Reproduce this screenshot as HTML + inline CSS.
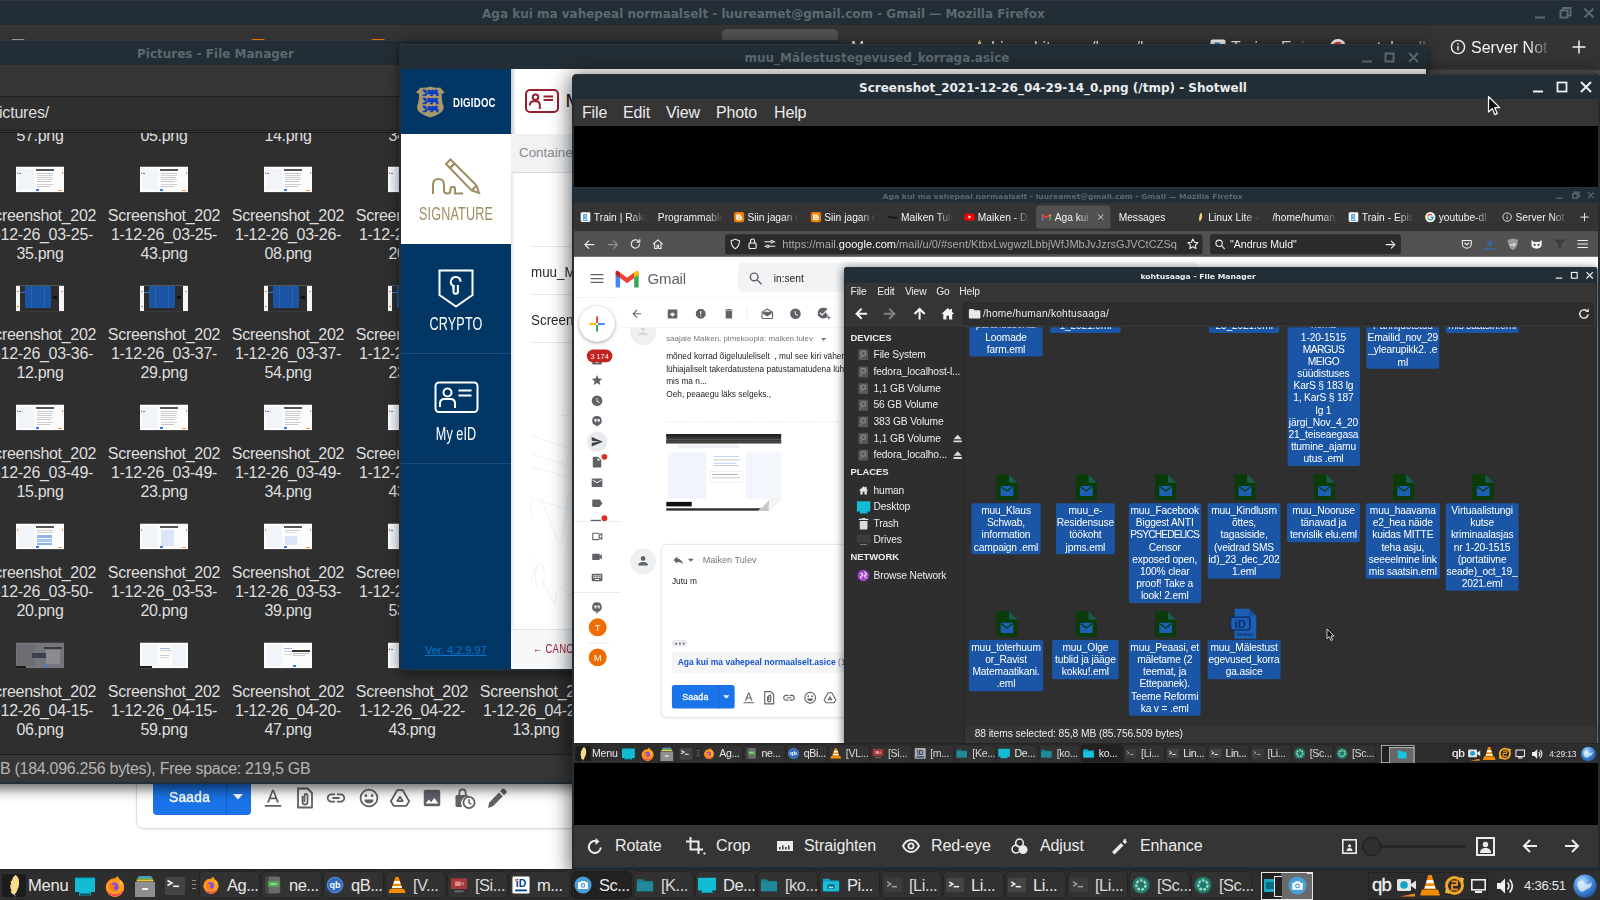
<!DOCTYPE html>
<html lang="et">
<head>
<meta charset="utf-8">
<title>Desktop</title>
<style>
*{box-sizing:border-box;margin:0;padding:0}
html,body{width:1600px;height:900px;overflow:hidden;background:#343434;font-family:"Liberation Sans",sans-serif;}
.abs{position:absolute}
.nw{white-space:nowrap}
.tb{position:absolute;background:#232d35;box-shadow:inset 0 1px 0 rgba(255,255,255,.05);height:25px;font-family:"DejaVu Sans",sans-serif;font-weight:bold;font-size:12px;color:#5b6971;line-height:25px;white-space:nowrap}
.tb.act{color:#e9ebec}
.tb span{position:absolute;top:1.500px}
svg{display:block;position:absolute;overflow:visible}
.desk{position:absolute;left:0;top:0;width:1600px;height:900px;overflow:hidden;background:#343434}
/* taskbar */
.task{position:absolute;left:0;top:869px;width:1600px;height:31px;background:#2e2e2e;border-top:1px solid #222;color:#e8e8e8;font-size:16.5px;white-space:nowrap}
.task .btn{position:absolute;top:1px;height:28px;width:61px;border:1px solid #232323;border-radius:5px;background:#323232}
.task .btn.on{background:#222;border-color:#1e1e1e}
.task .btn span{position:absolute;left:27px;top:0;line-height:26px;letter-spacing:-0.5px}
.task .btn.dim span{color:#d8d8d8}
.task .ic{position:absolute;left:2px;top:4px;width:18px;height:18px}
/* pictures file manager */
.lbl{position:absolute;width:124px;text-align:center;color:#dedede;font-size:16px;line-height:19px;letter-spacing:-0.3px;white-space:nowrap}
.th{position:absolute;width:48px;height:27px;background:#f3f5f8;overflow:hidden}
.th i{position:absolute;display:block}
.tl{position:absolute;background:#1a56a5;border-radius:3px;color:#fff;text-align:center;font-size:16px;line-height:19px;padding-top:2.500px;letter-spacing:-.27px;white-space:nowrap}
</style>
</head>
<body>
<div class="desk">

<!-- ===== main firefox window (background) ===== -->
<div class="abs ffw" style="left:0;top:0;width:1600px;height:869px;background:#fff;overflow:hidden">
<div class="tb" style="left:0;top:0;width:1600px"><span style="left:482px">Aga kui ma vahepeal normaalselt - luureamet@gmail.com - Gmail — Mozilla Firefox</span>
<svg style="left:1532px;top:0" width="70" height="25" viewBox="0 0 70 25" fill="none" stroke="#5b6971" stroke-width="2"><path d="M3 17.500h10"/><rect x="28.500" y="10.500" width="7" height="7"/><path d="M31 10.500v-2.500h7.500v7.500h-3"/><path d="M52.500 8.500l9 9M61.500 8.500l-9 9" stroke-width="1.800"/></svg></div>
<div class="abs" style="left:0;top:25px;width:1600px;height:44px;background:#343434;font-size:16px;color:#f4f4f4;white-space:nowrap">
<div class="abs" style="left:722px;top:4px;width:116px;height:36px;border-radius:5px;background:#515151"></div>
<svg style="left:10px;top:14px" width="16" height="16" viewBox="0 0 16 16"><rect x=".5" y=".5" width="15" height="15" rx="2" fill="#fff"/><path d="M4.500 12V3.500h3.500a2.600 2.600 0 0 1 .8 5.100L11 12H8.800L6.800 8.800H6.300V12zM6.300 5v2.300h1.600a1.150 1.150 0 0 0 0-2.300z" fill="#1a8fe0"/><rect x="3.500" y="13" width="9" height="1.200" fill="#1a8fe0"/></svg>
<div class="abs" style="left:31px;top:13px;width:83px;height:20px;line-height:19px;overflow:hidden;-webkit-mask-image:linear-gradient(90deg,#000 57px,transparent 81px);mask-image:linear-gradient(90deg,#000 57px,transparent 81px)">Train | Rakuten</div>
<div class="abs" style="left:131px;top:13px;width:103px;height:20px;line-height:19px;overflow:hidden;-webkit-mask-image:linear-gradient(90deg,#000 77px,transparent 101px);mask-image:linear-gradient(90deg,#000 77px,transparent 101px)">Programmable</div>
<svg style="left:250px;top:14px" width="16" height="16" viewBox="0 0 16 16"><rect width="16" height="16" rx="3.500" fill="#f57c00"/><path d="M5.800 3.500h3a2.200 2.200 0 0 1 2.200 2.200v.6c0 .4.300.7.700.7.400 0 .800.300.800.800v2.500A2.700 2.700 0 0 1 9.800 13h-4A2.700 2.700 0 0 1 3.500 10.300V5.800A2.300 2.300 0 0 1 5.800 3.500z" fill="#fff"/><rect x="5.500" y="5.600" width="3.500" height="1.300" rx=".6" fill="#f57c00"/><rect x="5.500" y="9.300" width="5" height="1.300" rx=".6" fill="#f57c00"/></svg>
<div class="abs" style="left:271px;top:13px;width:83px;height:20px;line-height:19px;overflow:hidden;-webkit-mask-image:linear-gradient(90deg,#000 57px,transparent 81px);mask-image:linear-gradient(90deg,#000 57px,transparent 81px)">Siin jagan oma</div>
<svg style="left:370px;top:14px" width="16" height="16" viewBox="0 0 16 16"><rect width="16" height="16" rx="3.500" fill="#f57c00"/><path d="M5.800 3.500h3a2.200 2.200 0 0 1 2.200 2.200v.6c0 .4.300.7.700.7.400 0 .800.300.800.800v2.500A2.700 2.700 0 0 1 9.800 13h-4A2.700 2.700 0 0 1 3.500 10.300V5.800A2.300 2.300 0 0 1 5.800 3.500z" fill="#fff"/><rect x="5.500" y="5.600" width="3.500" height="1.300" rx=".6" fill="#f57c00"/><rect x="5.500" y="9.300" width="5" height="1.300" rx=".6" fill="#f57c00"/></svg>
<div class="abs" style="left:391px;top:13px;width:83px;height:20px;line-height:19px;overflow:hidden;-webkit-mask-image:linear-gradient(90deg,#000 57px,transparent 81px);mask-image:linear-gradient(90deg,#000 57px,transparent 81px)">Siin jagan oma</div>
<svg style="left:490px;top:14px" width="16" height="16" viewBox="0 0 16 16"><path d="M1 8.500c2-2 4-1 6 0s4 1.500 8-.5" stroke="#111" stroke-width="2.200" fill="none"/></svg>
<div class="abs" style="left:511px;top:13px;width:83px;height:20px;line-height:19px;overflow:hidden;-webkit-mask-image:linear-gradient(90deg,#000 57px,transparent 81px);mask-image:linear-gradient(90deg,#000 57px,transparent 81px)">Maiken Tulev</div>
<svg style="left:610px;top:14px" width="16" height="16" viewBox="0 0 16 16"><rect x="0" y="2.500" width="16" height="11" rx="3" fill="#f00"/><path d="M6.300 5.300v5.400L11 8z" fill="#fff"/></svg>
<div class="abs" style="left:631px;top:13px;width:83px;height:20px;line-height:19px;overflow:hidden;-webkit-mask-image:linear-gradient(90deg,#000 57px,transparent 81px);mask-image:linear-gradient(90deg,#000 57px,transparent 81px)">Maiken - DJ</div>
<svg style="left:730px;top:14px" width="16" height="16" viewBox="0 0 16 16"><path d="M1 3.500h2.200L8 7.200l4.800-3.700H15v9.500h-2.400V6.800L8 10.300 3.400 6.800V13H1z" fill="#ea4335"/><path d="M1 3.500h1.200V13H1z" fill="#4285f4"/><path d="M1 11h2.400v2H1z" fill="#4285f4"/><path d="M12.600 6.800L15 4.500V13h-2.400z" fill="#34a853"/><path d="M12.600 4.200L15 3.500v2l-2.400 1.800z" fill="#fbbc04"/></svg>
<div class="abs" style="left:751px;top:13px;width:62px;height:20px;line-height:19px;overflow:hidden;-webkit-mask-image:linear-gradient(90deg,#000 36px,transparent 60px);mask-image:linear-gradient(90deg,#000 36px,transparent 60px)">Aga kui ma</div>
<div class="abs" style="left:851px;top:13px;width:103px;height:20px;line-height:19px;overflow:hidden;-webkit-mask-image:linear-gradient(90deg,#000 77px,transparent 101px);mask-image:linear-gradient(90deg,#000 77px,transparent 101px)">Messages</div>
<svg style="left:970px;top:14px" width="16" height="16" viewBox="0 0 16 16"><path d="M9.500 1c2 2 2.500 5 1.500 8.500-.6 2-1.500 4-3.500 5.500-.5-1-.8-2-.8-3.500C6.700 8 7.500 4 9.500 1z" fill="#f3d36a"/></svg>
<div class="abs" style="left:991px;top:13px;width:83px;height:20px;line-height:19px;overflow:hidden;-webkit-mask-image:linear-gradient(90deg,#000 57px,transparent 81px);mask-image:linear-gradient(90deg,#000 57px,transparent 81px)">Linux Lite - </div>
<div class="abs" style="left:1091px;top:13px;width:103px;height:20px;line-height:19px;overflow:hidden;-webkit-mask-image:linear-gradient(90deg,#000 77px,transparent 101px);mask-image:linear-gradient(90deg,#000 77px,transparent 101px)">/home/human/</div>
<svg style="left:1210px;top:14px" width="16" height="16" viewBox="0 0 16 16"><rect x=".5" y=".5" width="15" height="15" rx="2" fill="#fff"/><path d="M4.500 12V3.500h3.500a2.600 2.600 0 0 1 .8 5.100L11 12H8.800L6.800 8.800H6.300V12zM6.300 5v2.300h1.600a1.150 1.150 0 0 0 0-2.300z" fill="#1a8fe0"/><rect x="3.500" y="13" width="9" height="1.200" fill="#1a8fe0"/></svg>
<div class="abs" style="left:1231px;top:13px;width:83px;height:20px;line-height:19px;overflow:hidden;-webkit-mask-image:linear-gradient(90deg,#000 57px,transparent 81px);mask-image:linear-gradient(90deg,#000 57px,transparent 81px)">Train - Episode</div>
<svg style="left:1330px;top:14px" width="16" height="16" viewBox="0 0 16 16"><circle cx="8" cy="8" r="8" fill="#fff"/><path d="M13.300 8.100c0-.4 0-.7-.1-1.100H8v2.100h3c-.15.700-.5 1.300-1.100 1.700v1.400h1.800c1-1 1.600-2.400 1.600-4.100z" fill="#4285f4"/><path d="M8 13.500c1.500 0 2.700-.5 3.600-1.300L9.900 10.800c-.5.300-1.100.5-1.900.5-1.400 0-2.600-1-3.100-2.300H3.100v1.400A5.500 5.500 0 0 0 8 13.500z" fill="#34a853"/><path d="M4.900 9c-.2-.7-.2-1.400 0-2V5.600H3.100a5.500 5.500 0 0 0 0 4.800z" fill="#fbbc04"/><path d="M8 4.700c.8 0 1.500.3 2.100.8l1.500-1.500A5.500 5.500 0 0 0 3.100 5.600L4.900 7C5.400 5.700 6.600 4.700 8 4.700z" fill="#ea4335"/></svg>
<div class="abs" style="left:1351px;top:13px;width:83px;height:20px;line-height:19px;overflow:hidden;-webkit-mask-image:linear-gradient(90deg,#000 57px,transparent 81px);mask-image:linear-gradient(90deg,#000 57px,transparent 81px)">youtube-dl</div>
<svg style="left:1450px;top:14px" width="16" height="16" viewBox="0 0 16 16" fill="none" stroke="#f2f2f2" stroke-width="1.400"><circle cx="8" cy="8" r="6.600"/><path d="M8 7v4.500M8 4.300v1.400"/></svg>
<div class="abs" style="left:1471px;top:13px;width:83px;height:20px;line-height:19px;overflow:hidden;-webkit-mask-image:linear-gradient(90deg,#000 57px,transparent 81px);mask-image:linear-gradient(90deg,#000 57px,transparent 81px)">Server Not F</div>
<svg style="left:818px;top:17px" width="10" height="10" viewBox="0 0 10 10" stroke="#f2f2f2" stroke-width="1.300"><path d="M1 1l8 8M9 1l-8 8"/></svg>
<svg style="left:1572px;top:15px" width="14" height="14" viewBox="0 0 14 14" fill="none" stroke="#f2f2f2" stroke-width="1.500"><path d="M7 .5v13M.5 7h13"/></svg>
</div>
<div class="abs" style="left:0;top:69px;width:1600px;height:40px;background:#515151;border-top:1px solid #3e3e3e;border-bottom:1px solid #2f2f2f">
<svg style="left:15px;top:11px" width="18" height="18" viewBox="0 0 18 18" fill="none" stroke="#f0f0f0" stroke-width="1.700" stroke-linecap="round" stroke-linejoin="round"><path d="M16 9H2.500M8 3L2 9l6 6"/></svg>
<svg style="left:52px;top:11px" width="18" height="18" viewBox="0 0 18 18" fill="none" stroke="#f0f0f0" stroke-width="1.700" stroke-linecap="round" stroke-linejoin="round" opacity=".42"><path d="M2 9h13.500M10 3l6 6-6 6"/></svg>
<svg style="left:87px;top:10px" width="18" height="18" viewBox="0 0 18 18" fill="none" stroke="#f0f0f0" stroke-width="1.700" stroke-linecap="round" stroke-linejoin="round"><path d="M15.500 9.500a6.500 6.500 0 1 1-2-5.200"/><path d="M15.800 2v4.200h-4.200"/></svg>
<svg style="left:122px;top:10px" width="18" height="18" viewBox="0 0 18 18" fill="none" stroke="#f0f0f0" stroke-width="1.700" stroke-linecap="round" stroke-linejoin="round"><path d="M2 9l7-6.500L16 9M4 8v8h3.800v-5h2.400v5H14V8"/></svg>
<div class="abs" style="left:236px;top:4px;width:746px;height:31px;border-radius:4px;background:#2b2b2b"></div>
<svg style="left:243px;top:10px" width="18" height="18" viewBox="0 0 18 18" fill="none" stroke="#f0f0f0" stroke-width="1.700" stroke-linecap="round" stroke-linejoin="round" stroke-width="1.500"><path d="M9 1.500c2 1.300 4 1.800 6.500 2 0 6-2 10.500-6.500 13C4.500 14 2.500 9.500 2.500 3.500 5 3.300 7 2.800 9 1.500z"/></svg>
<svg style="left:271px;top:9px" width="16" height="19" viewBox="0 0 16 19" fill="none" stroke="#f0f0f0" stroke-width="1.700" stroke-linecap="round" stroke-linejoin="round" stroke-width="1.600"><rect x="2.500" y="8.500" width="11" height="8.500" rx="1.500"/><path d="M4.800 8.500V5.500a3.200 3.200 0 0 1 6.400 0v3"/></svg>
<svg style="left:296px;top:11px" width="20" height="16" viewBox="0 0 20 16" fill="none" stroke="#f0f0f0" stroke-width="1.700" stroke-linecap="round" stroke-linejoin="round" stroke-width="1.500"><path d="M2 4.500h9M15.500 4.500H18M2 11.500h2.500M9 11.500h9"/><circle cx="13.200" cy="4.500" r="2"/><circle cx="6.800" cy="11.500" r="2"/></svg>
<div class="abs nw" style="left:325.500px;top:8px;font-size:17.300px;line-height:22px;color:#a9a9a9">https://mail.<span style="color:#fbfbfb">google.com</span>/mail/u/0/#sent/KtbxLwgwzlLbbjWfJMbJvJzrsGJVCtCZSq</div>
<svg style="left:957px;top:9px" width="20" height="20" viewBox="0 0 20 20" fill="none" stroke="#f0f0f0" stroke-width="1.700" stroke-linecap="round" stroke-linejoin="round" stroke-width="1.500"><path d="M10 2.200l2.400 5 5.400.7-4 3.800 1 5.500-4.800-2.700-4.800 2.700 1-5.500-4-3.800 5.400-.7z"/></svg>
<div class="abs" style="left:994px;top:4px;width:298px;height:31px;border-radius:4px;background:#2b2b2b"></div>
<svg style="left:1001px;top:11px" width="17" height="17" viewBox="0 0 17 17" fill="none" stroke="#f0f0f0" stroke-width="1.700" stroke-linecap="round" stroke-linejoin="round" stroke-width="1.700"><circle cx="7" cy="7" r="5"/><path d="M11 11l4.500 4.500"/></svg>
<div class="abs nw" style="left:1025px;top:8px;font-size:16.500px;line-height:22px;color:#f4f4f4">"Andrus Muld"</div>
<svg style="left:1267px;top:11px" width="18" height="18" viewBox="0 0 18 18" fill="none" stroke="#f0f0f0" stroke-width="1.700" stroke-linecap="round" stroke-linejoin="round" stroke-width="1.500"><path d="M2 9h13.500M10 3.500L15.500 9 10 14.500"/></svg>
<svg style="left:1386px;top:10px" width="18" height="18" viewBox="0 0 18 18" fill="none" stroke="#f0f0f0" stroke-width="1.700" stroke-linecap="round" stroke-linejoin="round" stroke-width="1.500"><path d="M2 3.500h14v5a7 7 0 0 1-14 0z"/><path d="M5.800 7.500L9 10.500l3.200-3"/></svg>
<svg style="left:1422px;top:9px" width="18" height="20" viewBox="0 0 18 20" fill="none" stroke="#2f6fd0" stroke-width="1.700" stroke-linecap="round"><path d="M9 2v10M4.500 8L9 12.500 13.500 8M2 17.500h14"/></svg>
<svg style="left:1457px;top:9px" width="20" height="21" viewBox="0 0 20 21"><path d="M10 1c2.500 1.500 5 2 8 2.200 0 8-2.500 13.500-8 16.800C4.500 16.700 2 11.200 2 3.200 5 3 7.500 2.500 10 1z" fill="#9a9a9a"/><text x="10" y="12.500" font-size="6.500" font-weight="bold" text-anchor="middle" fill="#fff" font-family="Liberation Sans,sans-serif">uD</text></svg>
<svg style="left:1494px;top:11px" width="20" height="16" viewBox="0 0 20 16"><path d="M2 2l4 3h8l4-3v7c0 4-3.500 6.500-8 6.500S2 13 2 9z" fill="#f4f4f4"/><circle cx="7" cy="9.500" r="1.700" fill="#515151"/><circle cx="13" cy="9.500" r="1.700" fill="#515151"/></svg>
<svg style="left:1530px;top:11px" width="20" height="18" viewBox="0 0 20 18"><path d="M1 1h18l-7 8v7l-4-2.500V9z" fill="#3c3c3c"/></svg>
<svg style="left:1567px;top:11px" width="18" height="16" viewBox="0 0 18 16" fill="none" stroke="#f0f0f0" stroke-width="1.700" stroke-linecap="round" stroke-linejoin="round" stroke-width="1.700"><path d="M1.500 2.500h15M1.500 8h15M1.500 13.500h15"/></svg>
</div>
<div class="abs gm" style="left:0;top:109px;width:1600px;height:759px;background:#fff;color:#222">
 <!-- header -->
 <svg style="left:26px;top:26px" width="20" height="16" viewBox="0 0 20 16" stroke="#5f6368" stroke-width="2"><path d="M0 2h20M0 8h20M0 14h20"/></svg>
 <svg style="left:64px;top:20.500px" width="38" height="28" viewBox="0 0 38 28"><path d="M1 4.500v21a1.500 1.500 0 0 0 1.500 1.500H8V11z" fill="#4285f4"/><path d="M37 4.500v21a1.500 1.500 0 0 1-1.500 1.500H30V11z" fill="#34a853"/><path d="M30 3.500l3-2.300a2.500 2.500 0 0 1 4 2V7L30 12z" fill="#fbbc04"/><path d="M8 3.500L5 1.200a2.500 2.500 0 0 0-4 2V7l7 5z" fill="#c5221f"/><path d="M8 3.500V12l11 8.200L30 12V3.500L19 11.700z" fill="#ea4335"/></svg>
 <div class="abs nw" style="left:115px;top:19.500px;font-size:23.500px;line-height:30px;color:#5f6368;letter-spacing:-.3px">Gmail</div>
 <div class="abs" style="left:256px;top:9px;width:720px;height:46px;border-radius:8px;background:#f1f3f4"></div>
 <svg style="left:273px;top:22.500px" width="22" height="22" viewBox="0 0 22 22" fill="none" stroke="#5f6368" stroke-width="2.200"><circle cx="8.500" cy="8.500" r="6"/><path d="M13 13l7 7"/></svg>
 <div class="abs nw" style="left:312px;top:23.500px;font-size:16px;line-height:22px;color:#202124">in:sent</div>
 <div class="abs" style="left:0;top:63px;width:1600px;height:1px;background:#eceff1"></div>
 <!-- left rail -->
 <div class="abs" style="left:8px;top:77px;width:56px;height:56px;border-radius:50%;background:#fff;box-shadow:0 1px 3px rgba(60,64,67,.4),0 2px 7px 1px rgba(60,64,67,.18)"></div>
 <svg style="left:22px;top:91px" width="28" height="28" viewBox="0 0 28 28"><path d="M12.500 2h3v10.500h-3z" fill="#ea4335"/><path d="M12.500 15.500h3V26h-3z" fill="#34a853"/><path d="M2 12.500h10.500v3H2z" fill="#fbbc04"/><path d="M15.500 12.500H26v3H15.500z" fill="#4285f4"/></svg>

 <svg style="left:26px;top:151px" width="20" height="20" viewBox="0 0 24 24"><path d="M19 3H5c-1.100 0-2 .9-2 2v14c0 1.100.9 2 2 2h14c1.100 0 2-.9 2-2V5c0-1.100-.9-2-2-2zm0 12h-4c0 1.660-1.350 3-3 3s-3-1.340-3-3H5V5h14v10z" fill="#5f6368"/></svg>
 <div class="abs nw" style="left:20px;top:145px;width:40px;height:20px;border-radius:10px;background:#c5221f;color:#fff;font-size:11.500px;line-height:20px;text-align:center">3 174</div>
 <svg style="left:26px;top:183px" width="20" height="20" viewBox="0 0 24 24"><path d="M12 17.270L18.180 21l-1.640-7.030L22 9.240l-7.190-.61L12 2 9.190 8.630 2 9.240l5.460 4.730L5.820 21z" fill="#5f6368"/></svg>
 <svg style="left:26px;top:215px" width="20" height="20" viewBox="0 0 24 24"><path d="M12 2a10 10 0 1 0 0 20 10 10 0 0 0 0-20zm4.200 14.200L11 13V7h1.500v5.200l4.500 2.700z" fill="#5f6368"/></svg>
 <svg style="left:26px;top:247px" width="20" height="20" viewBox="0 0 24 24"><path d="M12 2a9 9 0 0 0-1.500 17.900V23l4-3.400A9 9 0 0 0 12 2zM11 12l-1 2H8.500l1-2H7V8h4zm6 0l-1 2h-1.500l1-2H13V8h4z" fill="#5f6368"/></svg>
 <div class="abs" style="left:20px;top:273px;width:32px;height:32px;border-radius:50%;background:#e8eaed"></div>
 <svg style="left:26px;top:279px" width="20" height="20" viewBox="0 0 24 24"><path d="M2.010 21L23 12 2.010 3 2 10l15 2-15 2z" fill="#3c4043"/></svg>
 <svg style="left:26px;top:311px" width="20" height="20" viewBox="0 0 24 24"><path d="M14 2H6c-1.100 0-2 .9-2 2v16c0 1.100.9 2 2 2h12c1.100 0 2-.9 2-2V8l-6-6zm-1 7V3.500L18.500 9H13z" fill="#5f6368"/></svg>
 <div class="abs" style="left:43px;top:308px;width:9px;height:9px;border-radius:50%;background:#d93025"></div>
 <svg style="left:26px;top:343px" width="20" height="20" viewBox="0 0 24 24"><path d="M20 4H4c-1.100 0-2 .9-2 2v12c0 1.100.9 2 2 2h16c1.100 0 2-.9 2-2V6c0-1.100-.9-2-2-2zm0 4l-8 5-8-5V6l8 5 8-5v2z" fill="#5f6368"/></svg>
 <svg style="left:26px;top:375px" width="20" height="20" viewBox="0 0 24 24"><path d="M17.630 5.840C17.270 5.330 16.670 5 16 5L5 5.010C3.900 5.010 3 5.900 3 7v10c0 1.100.9 1.990 2 1.990L16 19c.67 0 1.270-.33 1.630-.84L22 12l-4.370-6.160z" fill="#5f6368"/></svg>
 <div class="abs" style="left:26px;top:411px;width:16px;height:2px;background:#5f6368"></div>
 <div class="abs" style="left:43px;top:404px;width:9px;height:9px;border-radius:50%;background:#d93025"></div>
 <div class="abs" style="left:0;top:413px;width:72px;height:1px;background:#e0e0e0"></div>
 <svg style="left:26px;top:427px" width="20" height="20" viewBox="0 0 24 24" fill="none" stroke="#5f6368" stroke-width="2" stroke-linejoin="round"><path d="M4 6h9.500c1.400 0 2.500 1.100 2.500 2.500v7c0 1.400-1.100 2.500-2.500 2.500H4z" /><path d="M16 10.500l5-4v11l-5-4"/></svg>
 <svg style="left:26px;top:459px" width="20" height="20" viewBox="0 0 24 24"><path d="M17 10.500V7c0-.55-.45-1-1-1H4c-.55 0-1 .45-1 1v10c0 .55.450 1 1 1h12c.55 0 1-.45 1-1v-3.500l4 4v-11l-4 4z" fill="#5f6368"/></svg>
 <svg style="left:26px;top:491px" width="20" height="20" viewBox="0 0 24 24"><path d="M20 5H4c-1.100 0-1.990.9-1.990 2L2 17c0 1.100.9 2 2 2h16c1.100 0 2-.9 2-2V7c0-1.100-.9-2-2-2zm-9 3h2v2h-2V8zm0 3h2v2h-2v-2zM8 8h2v2H8V8zm0 3h2v2H8v-2zm-1 2H5v-2h2v2zm0-3H5V8h2v2zm9 7H8v-2h8v2zm0-4h-2v-2h2v2zm0-3h-2V8h2v2zm3 3h-2v-2h2v2zm0-3h-2V8h2v2z" fill="#5f6368"/></svg>
 <div class="abs" style="left:0;top:524px;width:72px;height:1px;background:#e0e0e0"></div>
 <svg style="left:26px;top:538px" width="20" height="22" viewBox="0 0 24 26"><path d="M12 2a9 9 0 0 0-1.500 17.900V24l4-4.400A9 9 0 0 0 12 2zM11 12l-1 2H8.500l1-2H7V8h4zm6 0l-1 2h-1.500l1-2H13V8h4z" fill="#5f6368"/></svg>
 <div class="abs" style="left:23px;top:565px;width:28px;height:28px;border-radius:50%;background:#ef6c00;color:#fff;font-size:15px;line-height:28px;text-align:center">T</div>
 <div class="abs" style="left:23px;top:603px;width:33px;height:1px;background:#e0e0e0"></div>
 <div class="abs" style="left:23px;top:612px;width:28px;height:28px;border-radius:50%;background:#ef6c00;color:#fff;font-size:15px;line-height:28px;text-align:center">M</div>
 <!-- message: avatar + text (toolbar overlays top) -->
 <div class="abs" style="left:88px;top:98px;width:40px;height:40px;border-radius:50%;background:#eff0f1;border:1px solid #e6e7e8"></div>
 <svg style="left:98px;top:106px" width="20" height="20" viewBox="0 0 24 24"><path d="M12 12c2.210 0 4-1.790 4-4s-1.790-4-4-4-4 1.790-4 4 1.790 4 4 4zm0 2c-2.670 0-8 1.340-8 4v2h16v-2c0-2.660-5.330-4-8-4z" fill="#d5d7da"/></svg>
 <div class="abs nw" style="left:144px;top:119px;font-size:12.400px;line-height:18px;color:#777">saajale Maiken, pimekoopia: maiken.tulev</div>
 <svg style="left:386px;top:127px" width="8" height="5" viewBox="0 0 8 5"><path d="M0 0h8L4 4.500z" fill="#777"/></svg>
 <div class="abs nw" style="left:144px;top:145.800px;font-size:13px;line-height:19.750px;color:#222">mõned korrad õigeluuleliselt &nbsp;, mul see kiri vähem oluline kui teised<br>lühiajaliselt takerdatustena patustamatudena lühidalt öeldes see<br>mis ma n...<br>Oeh, peaaegu läks selgeks.,</div>
 <div class="abs" style="left:144px;top:258px;width:900px;height:0;border-top:1px dotted #d8d8d8"></div>
 <!-- toolbar -->
 <div class="abs" style="left:72px;top:64px;width:1528px;height:47px;background:#fff;border-bottom:1px solid #eceff1"></div>
 <svg style="left:88px;top:79px" width="20" height="20" viewBox="0 0 24 24"><path d="M20 11H7.830l5.590-5.590L12 4l-8 8 8 8 1.410-1.410L7.830 13H20v-2z" fill="#5f6368"/></svg>
 <svg style="left:144px;top:79px" width="20" height="20" viewBox="0 0 24 24"><path d="M20.540 5.230l-1.390-1.680C18.880 3.210 18.470 3 18 3H6c-.47 0-.88.210-1.160.55L3.460 5.230C3.170 5.570 3 6.020 3 6.500V19c0 1.100.9 2 2 2h14c1.100 0 2-.9 2-2V6.500c0-.48-.17-.93-.46-1.270zM12 17.500L6.500 12H10v-2h4v2h3.500L12 17.500zM5.120 5l.81-1h12l.94 1H5.120z" fill="#5f6368"/></svg>
 <svg style="left:188px;top:79px" width="20" height="20" viewBox="0 0 24 24"><path d="M15.730 3H8.270L3 8.270v7.460L8.270 21h7.460L21 15.730V8.270L15.730 3zM12 17.300c-.72 0-1.300-.58-1.300-1.300s.58-1.300 1.300-1.300 1.300.58 1.300 1.300-.58 1.300-1.300 1.300zm1-4.300h-2V7h2v6z" fill="#5f6368"/></svg>
 <svg style="left:232px;top:79px" width="20" height="20" viewBox="0 0 24 24"><path d="M6 19c0 1.100.9 2 2 2h8c1.100 0 2-.9 2-2V7H6v12zM19 4h-3.500l-1-1h-5l-1 1H5v2h14V4z" fill="#5f6368"/></svg>
 <div class="abs" style="left:270px;top:78px;width:1px;height:20px;background:#e3e5e8"></div>
 <svg style="left:291px;top:78px" width="22" height="22" viewBox="0 0 24 24" fill="none" stroke="#5f6368" stroke-width="1.800" stroke-linejoin="round"><path d="M3 9.500L12 4l9 5.500V19a1 1 0 0 1-1 1H4a1 1 0 0 1-1-1z"/><path d="M5.500 11.500v-2h13v2L12 15.500z" fill="#5f6368"/></svg>
 <svg style="left:336px;top:79px" width="20" height="20" viewBox="0 0 24 24"><path d="M12 2a10 10 0 1 0 0 20 10 10 0 0 0 0-20zm4.200 14.200L11 13V7h1.500v5.200l4.500 2.700z" fill="#5f6368"/></svg>
 <svg style="left:379px;top:78px" width="22" height="22" viewBox="0 0 24 24"><path d="M11 2a9 9 0 1 0 8.500 12h-.1a6 6 0 0 1-.9-10.400A9 9 0 0 0 11 2zm-1.500 13.500L5 11l1.400-1.400 3.100 3.100 6.600-6.600L17.500 7.500z" fill="#5f6368"/><path d="M20 15.500h1.600v2.400H24v1.600h-2.400V22H20v-2.500h-2.400v-1.600H20z" fill="#5f6368"/></svg>
 <!-- inline image -->
 <div class="abs" style="left:144px;top:277px;width:180px;height:120px;background:#fff;overflow:hidden">
  <div class="abs" style="left:0;top:0;width:180px;height:15px;background:#333"></div><div class="abs" style="left:0;top:0;width:180px;height:4px;background:#222"></div><div class="abs" style="left:0;top:10px;width:180px;height:5px;background:#444"></div>
  <div class="abs" style="left:0;top:8px;width:180px;height:1px;background:#6a6a6a"></div>
  <div class="abs" style="left:0;top:15px;width:180px;height:14px;background:#fff"></div>
  <div class="abs" style="left:18px;top:17px;width:96px;height:5px;background:#eef1f5"></div>
  <div class="abs" style="left:3px;top:29px;width:60px;height:72px;background:#f0f5fc"></div>
  <div class="abs" style="left:124px;top:29px;width:56px;height:72px;background:#f3f7fd"></div>
  <div class="abs" style="left:68px;top:58px;width:52px;height:18px;border:1px solid #e4e6ea"></div>
  <div class="abs" style="left:74px;top:35px;width:40px;height:1px;background:#9db7e8"></div>
  <div class="abs" style="left:74px;top:40px;width:42px;height:1px;background:#aaa"></div>
  <div class="abs" style="left:74px;top:45px;width:36px;height:1px;background:#9db7e8"></div>
  <div class="abs" style="left:74px;top:49px;width:40px;height:1px;background:#aaa"></div>
  <div class="abs" style="left:72px;top:63px;width:40px;height:1px;background:#888"></div>
  <div class="abs" style="left:72px;top:68px;width:44px;height:1px;background:#aaa"></div>
  <div class="abs" style="left:0;top:106px;width:40px;height:7px;background:#111"></div>
  <div class="abs" style="left:0;top:116px;width:162px;height:4px;background:#2a2a2a"></div>
  <svg style="left:144px;top:100px" width="36" height="20" viewBox="0 0 36 20"><path d="M0 20h18L36 2V0H20z" fill="#fff"/><path d="M0 20L17 3l-1 17z" fill="#c8c8c8"/><path d="M16 20h2L36 2V0H20l-3 3z" fill="#f4f4f4"/></svg>
 </div>
 <!-- reply / compose -->
 <div class="abs" style="left:88px;top:456px;width:40px;height:40px;border-radius:50%;background:#eff0f1;border:1px solid #e8e9ea"></div>
 <svg style="left:97px;top:464px" width="22" height="22" viewBox="0 0 24 24"><path d="M12 12c2.210 0 4-1.790 4-4s-1.790-4-4-4-4 1.790-4 4 1.790 4 4 4zm0 2c-2.670 0-8 1.340-8 4v2h16v-2c0-2.660-5.330-4-8-4z" fill="#5f6368"/></svg>
 <div class="abs" style="left:136px;top:449px;width:1450px;height:271px;border:1px solid #dadce0;border-radius:8px;box-shadow:0 1px 2px rgba(0,0,0,.08)"></div>
 <svg style="left:153px;top:464px" width="20" height="20" viewBox="0 0 24 24"><path d="M10 9V5l-7 7 7 7v-4.100c5 0 8.500 1.600 11 5.100-1-5-4-10-11-11z" fill="#5f6368"/></svg>
 <svg style="left:178px;top:472px" width="9" height="5" viewBox="0 0 9 5"><path d="M0 0h9L4.500 4.500z" fill="#5f6368"/></svg>
 <div class="abs nw" style="left:201px;top:463px;font-size:14.300px;line-height:20px;color:#777">Maiken Tulev</div>
 <div class="abs nw" style="left:153px;top:498px;font-size:13px;line-height:18px;color:#222">Jutu m</div>
 <div class="abs" style="left:153px;top:599px;width:24px;height:10px;border-radius:5px;background:#e8eaed"></div>
 <div class="abs" style="left:157.500px;top:602.500px;width:3px;height:3px;border-radius:50%;background:#5f6368;box-shadow:6px 0 0 #5f6368,12px 0 0 #5f6368"></div>
 <div class="abs" style="left:153px;top:618px;width:1400px;height:32px;background:#f5f5f5"></div>
 <div class="abs nw" style="left:162px;top:624px;font-size:13.300px;line-height:20px;color:#15c;font-weight:bold">Aga kui ma vahepeal normaalselt.asice <span style="color:#777;font-weight:normal">(196 kB)</span></div>
 <div class="abs" style="left:153px;top:669px;width:98px;height:37px;border-radius:4px;background:#1a73e8"></div>
 <div class="abs" style="left:226px;top:669px;width:1px;height:37px;background:#1660c6"></div>
 <div class="abs nw" style="left:168.500px;top:677.500px;font-size:15px;line-height:20px;color:#fff;letter-spacing:.25px;-webkit-text-stroke:.45px #fff;transform:scaleX(.92);transform-origin:0 0">Saada</div>
 <svg style="left:233px;top:685px" width="10" height="6" viewBox="0 0 10 6"><path d="M0 0h10L5 5.500z" fill="#fff"/></svg>
 <!-- A format -->
 <svg style="left:262px;top:678px" width="22" height="22" viewBox="0 0 24 24"><path d="M3 21.500h18v-1.800H3zM5.500 17h2.200l1.300-3.600h6l1.300 3.600h2.200L13 3h-2zm4.200-5.500L12 5.300l2.300 6.200z" fill="#5f6368"/></svg>
 <!-- clip -->
 <svg style="left:295px;top:677px" width="20" height="24" viewBox="0 0 20 24" fill="none" stroke="#5f6368" stroke-width="1.800"><path d="M3 2.500h9.500L17 7v14.500H3z" stroke-linejoin="round"/><path d="M7.500 10v6a2.500 2.500 0 0 0 5 0V9.500a1.500 1.500 0 0 0-3 0V16"/></svg>
 <!-- link -->
 <svg style="left:325px;top:678px" width="22" height="22" viewBox="0 0 24 24"><path d="M3.900 12c0-1.710 1.390-3.100 3.100-3.100h4V7H7c-2.760 0-5 2.240-5 5s2.240 5 5 5h4v-1.900H7c-1.710 0-3.100-1.390-3.100-3.100zM8 13h8v-2H8v2zm9-6h-4v1.900h4c1.710 0 3.100 1.390 3.100 3.100s-1.390 3.100-3.100 3.100h-4V17h4c2.760 0 5-2.240 5-5s-2.240-5-5-5z" fill="#5f6368"/></svg>
 <!-- emoji -->
 <svg style="left:358px;top:678px" width="22" height="22" viewBox="0 0 24 24"><circle cx="12" cy="12" r="9.200" fill="none" stroke="#5f6368" stroke-width="1.900"/><circle cx="8.600" cy="9.500" r="1.500" fill="#5f6368"/><circle cx="15.400" cy="9.500" r="1.500" fill="#5f6368"/><path d="M6.800 13.500h10.400a5.300 5.300 0 0 1-10.400 0z" fill="#5f6368"/></svg>
 <!-- drive -->
 <svg style="left:389px;top:678px" width="22" height="22" viewBox="0 0 24 24" fill="none" stroke="#5f6368" stroke-width="1.900" stroke-linejoin="round"><path d="M9 3.500h6l7 12-3 5H5l-3-5z"/><path d="M12 10.500l-3 5h6z"/></svg>
 <!-- image -->
 <svg style="left:421px;top:678px" width="22" height="22" viewBox="0 0 24 24"><path d="M21 19V5c0-1.100-.9-2-2-2H5c-1.100 0-2 .9-2 2v14c0 1.100.9 2 2 2h14c1.100 0 2-.9 2-2zM8.500 13.500l2.500 3.010L14.500 12l4.500 6H5l3.500-4.500z" fill="#5f6368"/></svg>
 <!-- lock clock -->
 <svg style="left:453px;top:677px" width="24" height="24" viewBox="0 0 24 24"><path d="M4 9h1.500V6.500a4 4 0 0 1 8 0V9H15v1.200A7 7 0 0 0 9.300 21H4a1.500 1.500 0 0 1-1.500-1.500v-9A1.500 1.500 0 0 1 4 9zm3.200 0h4.600V6.500a2.300 2.300 0 0 0-4.600 0z" fill="#5f6368"/><circle cx="16" cy="16.500" r="5.600" fill="none" stroke="#5f6368" stroke-width="1.800"/><path d="M16 13.300v3.500l2.300 1.400" fill="none" stroke="#5f6368" stroke-width="1.500"/></svg>
 <!-- pen -->
 <svg style="left:486px;top:677px" width="22" height="24" viewBox="0 0 22 24"><path d="M2 22l1.200-5.500L13 6.500l3.800 3.800L7 20.300zM14 5.300l2.300-2.300a1.600 1.600 0 0 1 2.300 0l1.700 1.700a1.600 1.600 0 0 1 0 2.300L18 9.300z" fill="#5f6368"/></svg>

</div>

</div>


<!-- ===== Pictures - File Manager ===== -->
<div class="abs" id="pics" style="left:-337px;top:40px;width:1177px;height:744px;background:#2f2f2f;box-shadow:0 7px 12px -2px rgba(0,0,0,.6)">
<div class="tb" style="left:0;top:0;width:1177px"><span style="left:474px">Pictures - File Manager</span></div>
<div class="abs" style="left:0;top:25px;width:1177px;height:66px;background:#363636"></div>
<div class="abs" style="left:0;top:51px;width:1177px;height:1px;background:#303030"></div>
<div class="abs" style="left:0;top:56px;width:1177px;height:35px;background:#2f2f2f;border-top:1px solid #1f1f1f;border-bottom:1px solid #1f1f1f"></div>
<div class="abs nw" style="left:336px;top:63px;font-size:16px;line-height:20px;color:#dcdcdc;letter-spacing:-0.2px">ictures/</div>
<div class="abs" style="left:0;top:91px;width:1177px;height:2px;background:#333;border-bottom:1px solid #202020"></div>
<div class="abs" style="left:0;top:714px;width:1177px;height:28px;background:#363636;border-top:1px solid #1d1d1d"></div>
<div class="abs nw" style="left:337px;top:718.700px;font-size:16px;line-height:20px;color:#b4b4b4;letter-spacing:-0.29px">B (184.096.256 bytes), Free space: 219,5 GB</div>
<div class="abs" style="left:0;top:742px;width:1177px;height:2px;background:#232d35"></div>
</div>
<div class="abs" style="left:0;top:133px;width:573px;height:621px;overflow:hidden">
<div class="lbl" style="left:-22px;top:-45.5px">Screenshot_202<br>1-12-26_03-24-<br>57.png</div>
<div class="lbl" style="left:102px;top:-45.5px">Screenshot_202<br>1-12-26_03-25-<br>05.png</div>
<div class="lbl" style="left:226px;top:-45.5px">Screenshot_202<br>1-12-26_03-25-<br>14.png</div>
<div class="lbl" style="left:350px;top:-45.5px">Screenshot_202<br>1-12-26_03-25-<br>34.png</div>
<div class="lbl" style="left:474px;top:-45.5px">Screenshot_202<br>1-12-26_03-25-<br>30.png</div>
<div class="th" style="left:16px;top:32.5px;background:#fcfcfd"><i style="left:0px;top:0px;width:48px;height:1px;background:#666"></i><i style="left:2px;top:3px;width:16px;height:21px;background:#f1f5fa"></i><i style="left:20px;top:3px;width:18px;height:2px;background:#555"></i><i style="left:21px;top:7px;width:16px;height:1px;background:#c6c8cc"></i><i style="left:21px;top:9px;width:16px;height:1px;background:#d0d2d6"></i><i style="left:21px;top:11px;width:15px;height:1px;background:#c6c8cc"></i><i style="left:21px;top:13px;width:16px;height:1px;background:#d0d2d6"></i><i style="left:21px;top:15px;width:14px;height:1px;background:#c6c8cc"></i><i style="left:21px;top:18px;width:16px;height:1px;background:#d0d2d6"></i><i style="left:21px;top:20px;width:13px;height:1px;background:#c6c8cc"></i><i style="left:3px;top:7px;width:2px;height:1px;background:#3b78e7"></i><i style="left:20px;top:23px;width:3px;height:2px;background:#3b78e7"></i><i style="left:1px;top:6px;width:1px;height:2px;background:#e88a3c"></i><i style="left:46px;top:6px;width:1px;height:2px;background:#e88a3c"></i><i style="left:42px;top:24px;width:4px;height:1px;background:#e8a03c"></i><i style="left:0px;top:26px;width:48px;height:1px;background:#444"></i></div>
<div class="lbl" style="left:-22px;top:72.5px">Screenshot_202<br>1-12-26_03-25-<br>35.png</div>
<div class="th" style="left:140px;top:32.5px;background:#fcfcfd"><i style="left:0px;top:0px;width:48px;height:1px;background:#666"></i><i style="left:2px;top:3px;width:16px;height:21px;background:#f1f5fa"></i><i style="left:20px;top:3px;width:18px;height:2px;background:#555"></i><i style="left:21px;top:7px;width:16px;height:1px;background:#c6c8cc"></i><i style="left:21px;top:9px;width:16px;height:1px;background:#d0d2d6"></i><i style="left:21px;top:11px;width:15px;height:1px;background:#c6c8cc"></i><i style="left:21px;top:13px;width:16px;height:1px;background:#d0d2d6"></i><i style="left:21px;top:15px;width:14px;height:1px;background:#c6c8cc"></i><i style="left:21px;top:18px;width:16px;height:1px;background:#d0d2d6"></i><i style="left:21px;top:20px;width:13px;height:1px;background:#c6c8cc"></i><i style="left:3px;top:7px;width:2px;height:1px;background:#3b78e7"></i><i style="left:20px;top:23px;width:3px;height:2px;background:#3b78e7"></i><i style="left:1px;top:6px;width:1px;height:2px;background:#e88a3c"></i><i style="left:46px;top:6px;width:1px;height:2px;background:#e88a3c"></i><i style="left:42px;top:24px;width:4px;height:1px;background:#e8a03c"></i><i style="left:0px;top:26px;width:48px;height:1px;background:#444"></i></div>
<div class="lbl" style="left:102px;top:72.5px">Screenshot_202<br>1-12-26_03-25-<br>43.png</div>
<div class="th" style="left:264px;top:32.5px;background:#fcfcfd"><i style="left:0px;top:0px;width:48px;height:1px;background:#666"></i><i style="left:2px;top:3px;width:16px;height:21px;background:#f1f5fa"></i><i style="left:20px;top:3px;width:18px;height:2px;background:#555"></i><i style="left:21px;top:7px;width:16px;height:1px;background:#c6c8cc"></i><i style="left:21px;top:9px;width:16px;height:1px;background:#d0d2d6"></i><i style="left:21px;top:11px;width:15px;height:1px;background:#c6c8cc"></i><i style="left:21px;top:13px;width:16px;height:1px;background:#d0d2d6"></i><i style="left:21px;top:15px;width:14px;height:1px;background:#c6c8cc"></i><i style="left:21px;top:18px;width:16px;height:1px;background:#d0d2d6"></i><i style="left:21px;top:20px;width:13px;height:1px;background:#c6c8cc"></i><i style="left:3px;top:7px;width:2px;height:1px;background:#3b78e7"></i><i style="left:20px;top:23px;width:3px;height:2px;background:#3b78e7"></i><i style="left:1px;top:6px;width:1px;height:2px;background:#e88a3c"></i><i style="left:46px;top:6px;width:1px;height:2px;background:#e88a3c"></i><i style="left:42px;top:24px;width:4px;height:1px;background:#e8a03c"></i><i style="left:0px;top:26px;width:48px;height:1px;background:#444"></i></div>
<div class="lbl" style="left:226px;top:72.5px">Screenshot_202<br>1-12-26_03-26-<br>08.png</div>
<div class="th" style="left:388px;top:32.5px;background:#fcfcfd"><i style="left:0px;top:0px;width:48px;height:1px;background:#666"></i><i style="left:2px;top:3px;width:16px;height:21px;background:#f1f5fa"></i><i style="left:20px;top:3px;width:18px;height:2px;background:#555"></i><i style="left:21px;top:7px;width:16px;height:1px;background:#c6c8cc"></i><i style="left:21px;top:9px;width:16px;height:1px;background:#d0d2d6"></i><i style="left:21px;top:11px;width:15px;height:1px;background:#c6c8cc"></i><i style="left:21px;top:13px;width:16px;height:1px;background:#d0d2d6"></i><i style="left:21px;top:15px;width:14px;height:1px;background:#c6c8cc"></i><i style="left:21px;top:18px;width:16px;height:1px;background:#d0d2d6"></i><i style="left:21px;top:20px;width:13px;height:1px;background:#c6c8cc"></i><i style="left:3px;top:7px;width:2px;height:1px;background:#3b78e7"></i><i style="left:20px;top:23px;width:3px;height:2px;background:#3b78e7"></i><i style="left:1px;top:6px;width:1px;height:2px;background:#e88a3c"></i><i style="left:46px;top:6px;width:1px;height:2px;background:#e88a3c"></i><i style="left:42px;top:24px;width:4px;height:1px;background:#e8a03c"></i><i style="left:0px;top:26px;width:48px;height:1px;background:#444"></i></div>
<div class="lbl" style="left:350px;top:72.5px">Screenshot_202<br>1-12-26_03-26-<br>20.png</div>
<div class="th" style="left:512px;top:32.5px;background:#fcfcfd"><i style="left:0px;top:0px;width:48px;height:1px;background:#666"></i><i style="left:2px;top:3px;width:16px;height:21px;background:#f1f5fa"></i><i style="left:20px;top:3px;width:18px;height:2px;background:#555"></i><i style="left:21px;top:7px;width:16px;height:1px;background:#c6c8cc"></i><i style="left:21px;top:9px;width:16px;height:1px;background:#d0d2d6"></i><i style="left:21px;top:11px;width:15px;height:1px;background:#c6c8cc"></i><i style="left:21px;top:13px;width:16px;height:1px;background:#d0d2d6"></i><i style="left:21px;top:15px;width:14px;height:1px;background:#c6c8cc"></i><i style="left:21px;top:18px;width:16px;height:1px;background:#d0d2d6"></i><i style="left:21px;top:20px;width:13px;height:1px;background:#c6c8cc"></i><i style="left:3px;top:7px;width:2px;height:1px;background:#3b78e7"></i><i style="left:20px;top:23px;width:3px;height:2px;background:#3b78e7"></i><i style="left:1px;top:6px;width:1px;height:2px;background:#e88a3c"></i><i style="left:46px;top:6px;width:1px;height:2px;background:#e88a3c"></i><i style="left:42px;top:24px;width:4px;height:1px;background:#e8a03c"></i><i style="left:0px;top:26px;width:48px;height:1px;background:#444"></i></div>
<div class="lbl" style="left:474px;top:72.5px">Screenshot_202<br>1-12-26_03-26-<br>31.png</div>
<div class="th" style="left:16px;top:151.5px;background:#2d2d2d"><i style="left:0px;top:0px;width:48px;height:1px;background:#555"></i><i style="left:0px;top:1px;width:4px;height:25px;background:#f6f6f6"></i><i style="left:43px;top:1px;width:5px;height:25px;background:#f6f6f6"></i><i style="left:9px;top:1px;width:26px;height:22px;background:#1b56a6"></i><i style="left:15px;top:1px;width:1px;height:22px;background:#2a63b0"></i><i style="left:28px;top:1px;width:1px;height:22px;background:#2a63b0"></i><i style="left:37px;top:11px;width:4px;height:3px;background:#111"></i><i style="left:1px;top:6px;width:2px;height:1px;background:#e88a3c"></i><i style="left:1px;top:21px;width:2px;height:1px;background:#e88a3c"></i><i style="left:45px;top:6px;width:2px;height:1px;background:#e88a3c"></i><i style="left:4px;top:7px;width:5px;height:1px;background:#2f7fe0"></i><i style="left:0px;top:26px;width:48px;height:1px;background:#3a3a3a"></i></div>
<div class="lbl" style="left:-22px;top:191.5px">Screenshot_202<br>1-12-26_03-36-<br>12.png</div>
<div class="th" style="left:140px;top:151.5px;background:#2d2d2d"><i style="left:0px;top:0px;width:48px;height:1px;background:#555"></i><i style="left:0px;top:1px;width:4px;height:25px;background:#f6f6f6"></i><i style="left:43px;top:1px;width:5px;height:25px;background:#f6f6f6"></i><i style="left:9px;top:1px;width:26px;height:22px;background:#1b56a6"></i><i style="left:15px;top:1px;width:1px;height:22px;background:#2a63b0"></i><i style="left:28px;top:1px;width:1px;height:22px;background:#2a63b0"></i><i style="left:37px;top:11px;width:4px;height:3px;background:#111"></i><i style="left:1px;top:6px;width:2px;height:1px;background:#e88a3c"></i><i style="left:1px;top:21px;width:2px;height:1px;background:#e88a3c"></i><i style="left:45px;top:6px;width:2px;height:1px;background:#e88a3c"></i><i style="left:4px;top:7px;width:5px;height:1px;background:#2f7fe0"></i><i style="left:0px;top:26px;width:48px;height:1px;background:#3a3a3a"></i></div>
<div class="lbl" style="left:102px;top:191.5px">Screenshot_202<br>1-12-26_03-37-<br>29.png</div>
<div class="th" style="left:264px;top:151.5px;background:#2d2d2d"><i style="left:0px;top:0px;width:48px;height:1px;background:#555"></i><i style="left:0px;top:1px;width:4px;height:25px;background:#f6f6f6"></i><i style="left:43px;top:1px;width:5px;height:25px;background:#f6f6f6"></i><i style="left:9px;top:1px;width:26px;height:22px;background:#1b56a6"></i><i style="left:15px;top:1px;width:1px;height:22px;background:#2a63b0"></i><i style="left:28px;top:1px;width:1px;height:22px;background:#2a63b0"></i><i style="left:37px;top:11px;width:4px;height:3px;background:#111"></i><i style="left:1px;top:6px;width:2px;height:1px;background:#e88a3c"></i><i style="left:1px;top:21px;width:2px;height:1px;background:#e88a3c"></i><i style="left:45px;top:6px;width:2px;height:1px;background:#e88a3c"></i><i style="left:4px;top:7px;width:5px;height:1px;background:#2f7fe0"></i><i style="left:0px;top:26px;width:48px;height:1px;background:#3a3a3a"></i></div>
<div class="lbl" style="left:226px;top:191.5px">Screenshot_202<br>1-12-26_03-37-<br>54.png</div>
<div class="th" style="left:388px;top:151.5px;background:#2d2d2d"><i style="left:0px;top:0px;width:48px;height:1px;background:#555"></i><i style="left:0px;top:1px;width:4px;height:25px;background:#f6f6f6"></i><i style="left:43px;top:1px;width:5px;height:25px;background:#f6f6f6"></i><i style="left:9px;top:1px;width:26px;height:22px;background:#1b56a6"></i><i style="left:15px;top:1px;width:1px;height:22px;background:#2a63b0"></i><i style="left:28px;top:1px;width:1px;height:22px;background:#2a63b0"></i><i style="left:37px;top:11px;width:4px;height:3px;background:#111"></i><i style="left:1px;top:6px;width:2px;height:1px;background:#e88a3c"></i><i style="left:1px;top:21px;width:2px;height:1px;background:#e88a3c"></i><i style="left:45px;top:6px;width:2px;height:1px;background:#e88a3c"></i><i style="left:4px;top:7px;width:5px;height:1px;background:#2f7fe0"></i><i style="left:0px;top:26px;width:48px;height:1px;background:#3a3a3a"></i></div>
<div class="lbl" style="left:350px;top:191.5px">Screenshot_202<br>1-12-26_03-38-<br>23.png</div>
<div class="th" style="left:512px;top:151.5px;background:#2d2d2d"><i style="left:0px;top:0px;width:48px;height:1px;background:#555"></i><i style="left:0px;top:1px;width:4px;height:25px;background:#f6f6f6"></i><i style="left:43px;top:1px;width:5px;height:25px;background:#f6f6f6"></i><i style="left:9px;top:1px;width:26px;height:22px;background:#1b56a6"></i><i style="left:15px;top:1px;width:1px;height:22px;background:#2a63b0"></i><i style="left:28px;top:1px;width:1px;height:22px;background:#2a63b0"></i><i style="left:37px;top:11px;width:4px;height:3px;background:#111"></i><i style="left:1px;top:6px;width:2px;height:1px;background:#e88a3c"></i><i style="left:1px;top:21px;width:2px;height:1px;background:#e88a3c"></i><i style="left:45px;top:6px;width:2px;height:1px;background:#e88a3c"></i><i style="left:4px;top:7px;width:5px;height:1px;background:#2f7fe0"></i><i style="left:0px;top:26px;width:48px;height:1px;background:#3a3a3a"></i></div>
<div class="lbl" style="left:474px;top:191.5px">Screenshot_202<br>1-12-26_03-38-<br>40.png</div>
<div class="th" style="left:16px;top:270.5px;background:#fcfcfd"><i style="left:0px;top:0px;width:48px;height:1px;background:#666"></i><i style="left:2px;top:3px;width:16px;height:21px;background:#f1f5fa"></i><i style="left:20px;top:3px;width:18px;height:2px;background:#555"></i><i style="left:21px;top:7px;width:16px;height:1px;background:#c6c8cc"></i><i style="left:21px;top:9px;width:16px;height:1px;background:#d0d2d6"></i><i style="left:21px;top:11px;width:15px;height:1px;background:#c6c8cc"></i><i style="left:21px;top:13px;width:16px;height:1px;background:#d0d2d6"></i><i style="left:21px;top:15px;width:14px;height:1px;background:#c6c8cc"></i><i style="left:21px;top:18px;width:16px;height:1px;background:#d0d2d6"></i><i style="left:21px;top:20px;width:13px;height:1px;background:#c6c8cc"></i><i style="left:3px;top:7px;width:2px;height:1px;background:#3b78e7"></i><i style="left:20px;top:23px;width:3px;height:2px;background:#3b78e7"></i><i style="left:1px;top:6px;width:1px;height:2px;background:#e88a3c"></i><i style="left:46px;top:6px;width:1px;height:2px;background:#e88a3c"></i><i style="left:42px;top:24px;width:4px;height:1px;background:#e8a03c"></i><i style="left:0px;top:26px;width:48px;height:1px;background:#444"></i></div>
<div class="lbl" style="left:-22px;top:310.5px">Screenshot_202<br>1-12-26_03-49-<br>15.png</div>
<div class="th" style="left:140px;top:270.5px;background:#fcfcfd"><i style="left:0px;top:0px;width:48px;height:1px;background:#666"></i><i style="left:2px;top:3px;width:16px;height:21px;background:#f1f5fa"></i><i style="left:20px;top:3px;width:18px;height:2px;background:#555"></i><i style="left:21px;top:7px;width:16px;height:1px;background:#c6c8cc"></i><i style="left:21px;top:9px;width:16px;height:1px;background:#d0d2d6"></i><i style="left:21px;top:11px;width:15px;height:1px;background:#c6c8cc"></i><i style="left:21px;top:13px;width:16px;height:1px;background:#d0d2d6"></i><i style="left:21px;top:15px;width:14px;height:1px;background:#c6c8cc"></i><i style="left:21px;top:18px;width:16px;height:1px;background:#d0d2d6"></i><i style="left:21px;top:20px;width:13px;height:1px;background:#c6c8cc"></i><i style="left:3px;top:7px;width:2px;height:1px;background:#3b78e7"></i><i style="left:20px;top:23px;width:3px;height:2px;background:#3b78e7"></i><i style="left:1px;top:6px;width:1px;height:2px;background:#e88a3c"></i><i style="left:46px;top:6px;width:1px;height:2px;background:#e88a3c"></i><i style="left:42px;top:24px;width:4px;height:1px;background:#e8a03c"></i><i style="left:0px;top:26px;width:48px;height:1px;background:#444"></i></div>
<div class="lbl" style="left:102px;top:310.5px">Screenshot_202<br>1-12-26_03-49-<br>23.png</div>
<div class="th" style="left:264px;top:270.5px;background:#fcfcfd"><i style="left:0px;top:0px;width:48px;height:1px;background:#666"></i><i style="left:2px;top:3px;width:16px;height:21px;background:#f1f5fa"></i><i style="left:20px;top:3px;width:18px;height:2px;background:#555"></i><i style="left:21px;top:7px;width:16px;height:1px;background:#c6c8cc"></i><i style="left:21px;top:9px;width:16px;height:1px;background:#d0d2d6"></i><i style="left:21px;top:11px;width:15px;height:1px;background:#c6c8cc"></i><i style="left:21px;top:13px;width:16px;height:1px;background:#d0d2d6"></i><i style="left:21px;top:15px;width:14px;height:1px;background:#c6c8cc"></i><i style="left:21px;top:18px;width:16px;height:1px;background:#d0d2d6"></i><i style="left:21px;top:20px;width:13px;height:1px;background:#c6c8cc"></i><i style="left:3px;top:7px;width:2px;height:1px;background:#3b78e7"></i><i style="left:20px;top:23px;width:3px;height:2px;background:#3b78e7"></i><i style="left:1px;top:6px;width:1px;height:2px;background:#e88a3c"></i><i style="left:46px;top:6px;width:1px;height:2px;background:#e88a3c"></i><i style="left:42px;top:24px;width:4px;height:1px;background:#e8a03c"></i><i style="left:0px;top:26px;width:48px;height:1px;background:#444"></i></div>
<div class="lbl" style="left:226px;top:310.5px">Screenshot_202<br>1-12-26_03-49-<br>34.png</div>
<div class="th" style="left:388px;top:270.5px;background:#fcfcfd"><i style="left:0px;top:0px;width:48px;height:1px;background:#666"></i><i style="left:2px;top:3px;width:16px;height:21px;background:#f1f5fa"></i><i style="left:20px;top:3px;width:18px;height:2px;background:#555"></i><i style="left:21px;top:7px;width:16px;height:1px;background:#c6c8cc"></i><i style="left:21px;top:9px;width:16px;height:1px;background:#d0d2d6"></i><i style="left:21px;top:11px;width:15px;height:1px;background:#c6c8cc"></i><i style="left:21px;top:13px;width:16px;height:1px;background:#d0d2d6"></i><i style="left:21px;top:15px;width:14px;height:1px;background:#c6c8cc"></i><i style="left:21px;top:18px;width:16px;height:1px;background:#d0d2d6"></i><i style="left:21px;top:20px;width:13px;height:1px;background:#c6c8cc"></i><i style="left:3px;top:7px;width:2px;height:1px;background:#3b78e7"></i><i style="left:20px;top:23px;width:3px;height:2px;background:#3b78e7"></i><i style="left:1px;top:6px;width:1px;height:2px;background:#e88a3c"></i><i style="left:46px;top:6px;width:1px;height:2px;background:#e88a3c"></i><i style="left:42px;top:24px;width:4px;height:1px;background:#e8a03c"></i><i style="left:0px;top:26px;width:48px;height:1px;background:#444"></i></div>
<div class="lbl" style="left:350px;top:310.5px">Screenshot_202<br>1-12-26_03-49-<br>43.png</div>
<div class="th" style="left:512px;top:270.5px;background:#fcfcfd"><i style="left:0px;top:0px;width:48px;height:1px;background:#666"></i><i style="left:2px;top:3px;width:16px;height:21px;background:#f1f5fa"></i><i style="left:20px;top:3px;width:18px;height:2px;background:#555"></i><i style="left:21px;top:7px;width:16px;height:1px;background:#c6c8cc"></i><i style="left:21px;top:9px;width:16px;height:1px;background:#d0d2d6"></i><i style="left:21px;top:11px;width:15px;height:1px;background:#c6c8cc"></i><i style="left:21px;top:13px;width:16px;height:1px;background:#d0d2d6"></i><i style="left:21px;top:15px;width:14px;height:1px;background:#c6c8cc"></i><i style="left:21px;top:18px;width:16px;height:1px;background:#d0d2d6"></i><i style="left:21px;top:20px;width:13px;height:1px;background:#c6c8cc"></i><i style="left:3px;top:7px;width:2px;height:1px;background:#3b78e7"></i><i style="left:20px;top:23px;width:3px;height:2px;background:#3b78e7"></i><i style="left:1px;top:6px;width:1px;height:2px;background:#e88a3c"></i><i style="left:46px;top:6px;width:1px;height:2px;background:#e88a3c"></i><i style="left:42px;top:24px;width:4px;height:1px;background:#e8a03c"></i><i style="left:0px;top:26px;width:48px;height:1px;background:#444"></i></div>
<div class="lbl" style="left:474px;top:310.5px">Screenshot_202<br>1-12-26_03-49-<br>50.png</div>
<div class="th" style="left:16px;top:389.5px;background:#fcfcfd"><i style="left:0px;top:0px;width:48px;height:1px;background:#666"></i><i style="left:2px;top:3px;width:16px;height:21px;background:#f1f5fa"></i><i style="left:20px;top:3px;width:18px;height:2px;background:#555"></i><i style="left:21px;top:7px;width:16px;height:1px;background:#ccc"></i><i style="left:21px;top:9px;width:16px;height:1px;background:#ccc"></i><i style="left:21px;top:12px;width:15px;height:3px;background:#8fb4f0"></i><i style="left:21px;top:16px;width:15px;height:3px;background:#a9c6f5"></i><i style="left:21px;top:20px;width:15px;height:2px;background:#8fb4f0"></i><i style="left:20px;top:23px;width:3px;height:2px;background:#3b78e7"></i><i style="left:1px;top:6px;width:1px;height:2px;background:#e88a3c"></i><i style="left:46px;top:6px;width:1px;height:2px;background:#e88a3c"></i><i style="left:42px;top:24px;width:4px;height:1px;background:#e8a03c"></i><i style="left:0px;top:26px;width:48px;height:1px;background:#444"></i></div>
<div class="lbl" style="left:-22px;top:429.5px">Screenshot_202<br>1-12-26_03-50-<br>20.png</div>
<div class="th" style="left:140px;top:389.5px;background:#fcfcfd"><i style="left:0px;top:0px;width:48px;height:1px;background:#666"></i><i style="left:2px;top:3px;width:16px;height:21px;background:#f1f5fa"></i><i style="left:20px;top:3px;width:18px;height:2px;background:#555"></i><i style="left:21px;top:7px;width:13px;height:16px;background:#dbe6f8"></i><i style="left:20px;top:23px;width:3px;height:2px;background:#3b78e7"></i><i style="left:1px;top:6px;width:1px;height:2px;background:#e88a3c"></i><i style="left:46px;top:6px;width:1px;height:2px;background:#e88a3c"></i><i style="left:42px;top:24px;width:4px;height:1px;background:#e8a03c"></i><i style="left:0px;top:26px;width:48px;height:1px;background:#444"></i></div>
<div class="lbl" style="left:102px;top:429.5px">Screenshot_202<br>1-12-26_03-53-<br>20.png</div>
<div class="th" style="left:264px;top:389.5px;background:#fcfcfd"><i style="left:0px;top:0px;width:48px;height:1px;background:#666"></i><i style="left:2px;top:3px;width:16px;height:21px;background:#f1f5fa"></i><i style="left:20px;top:3px;width:18px;height:2px;background:#555"></i><i style="left:21px;top:7px;width:15px;height:1px;background:#ccc"></i><i style="left:21px;top:9px;width:12px;height:1px;background:#ddd"></i><i style="left:21px;top:13px;width:12px;height:9px;background:#dbe6f8"></i><i style="left:20px;top:23px;width:3px;height:2px;background:#3b78e7"></i><i style="left:1px;top:6px;width:1px;height:2px;background:#e88a3c"></i><i style="left:46px;top:6px;width:1px;height:2px;background:#e88a3c"></i><i style="left:42px;top:24px;width:4px;height:1px;background:#e8a03c"></i><i style="left:0px;top:26px;width:48px;height:1px;background:#444"></i></div>
<div class="lbl" style="left:226px;top:429.5px">Screenshot_202<br>1-12-26_03-53-<br>39.png</div>
<div class="th" style="left:388px;top:389.5px;background:#fcfcfd"><i style="left:0px;top:0px;width:48px;height:1px;background:#666"></i><i style="left:2px;top:3px;width:16px;height:21px;background:#f1f5fa"></i><i style="left:20px;top:3px;width:18px;height:2px;background:#555"></i><i style="left:21px;top:7px;width:16px;height:1px;background:#c6c8cc"></i><i style="left:21px;top:9px;width:16px;height:1px;background:#d0d2d6"></i><i style="left:21px;top:11px;width:15px;height:1px;background:#c6c8cc"></i><i style="left:21px;top:13px;width:16px;height:1px;background:#d0d2d6"></i><i style="left:21px;top:15px;width:14px;height:1px;background:#c6c8cc"></i><i style="left:21px;top:18px;width:16px;height:1px;background:#d0d2d6"></i><i style="left:21px;top:20px;width:13px;height:1px;background:#c6c8cc"></i><i style="left:3px;top:7px;width:2px;height:1px;background:#3b78e7"></i><i style="left:20px;top:23px;width:3px;height:2px;background:#3b78e7"></i><i style="left:1px;top:6px;width:1px;height:2px;background:#e88a3c"></i><i style="left:46px;top:6px;width:1px;height:2px;background:#e88a3c"></i><i style="left:42px;top:24px;width:4px;height:1px;background:#e8a03c"></i><i style="left:0px;top:26px;width:48px;height:1px;background:#444"></i></div>
<div class="lbl" style="left:350px;top:429.5px">Screenshot_202<br>1-12-26_03-53-<br>53.png</div>
<div class="th" style="left:512px;top:389.5px;background:#fcfcfd"><i style="left:0px;top:0px;width:48px;height:1px;background:#666"></i><i style="left:2px;top:3px;width:16px;height:21px;background:#f1f5fa"></i><i style="left:20px;top:3px;width:18px;height:2px;background:#555"></i><i style="left:21px;top:7px;width:16px;height:1px;background:#c6c8cc"></i><i style="left:21px;top:9px;width:16px;height:1px;background:#d0d2d6"></i><i style="left:21px;top:11px;width:15px;height:1px;background:#c6c8cc"></i><i style="left:21px;top:13px;width:16px;height:1px;background:#d0d2d6"></i><i style="left:21px;top:15px;width:14px;height:1px;background:#c6c8cc"></i><i style="left:21px;top:18px;width:16px;height:1px;background:#d0d2d6"></i><i style="left:21px;top:20px;width:13px;height:1px;background:#c6c8cc"></i><i style="left:3px;top:7px;width:2px;height:1px;background:#3b78e7"></i><i style="left:20px;top:23px;width:3px;height:2px;background:#3b78e7"></i><i style="left:1px;top:6px;width:1px;height:2px;background:#e88a3c"></i><i style="left:46px;top:6px;width:1px;height:2px;background:#e88a3c"></i><i style="left:42px;top:24px;width:4px;height:1px;background:#e8a03c"></i><i style="left:0px;top:26px;width:48px;height:1px;background:#444"></i></div>
<div class="lbl" style="left:474px;top:429.5px">Screenshot_202<br>1-12-26_03-54-<br>10.png</div>
<div class="th" style="left:16px;top:508.5px;background:#74767b"><i style="left:0px;top:0px;width:48px;height:1px;background:#444"></i><i style="left:1px;top:2px;width:18px;height:22px;background:#6c6e73"></i><i style="left:16px;top:11px;width:16px;height:5px;background:#3c3f52"></i><i style="left:28px;top:5px;width:18px;height:2px;background:#3a3a3a"></i><i style="left:30px;top:8px;width:14px;height:14px;background:#8a8c91"></i><i style="left:29px;top:23px;width:3px;height:2px;background:#3b78e7"></i><i style="left:0px;top:24px;width:10px;height:2px;background:#1a1a1a"></i><i style="left:0px;top:26px;width:48px;height:1px;background:#333"></i></div>
<div class="lbl" style="left:-22px;top:548.5px">Screenshot_202<br>1-12-26_04-15-<br>06.png</div>
<div class="th" style="left:140px;top:508.5px;background:#fcfcfd"><i style="left:0px;top:0px;width:48px;height:1px;background:#666"></i><i style="left:2px;top:3px;width:16px;height:21px;background:#f1f5fa"></i><i style="left:32px;top:3px;width:14px;height:21px;background:#f1f5fa"></i><i style="left:20px;top:6px;width:10px;height:1px;background:#9db7e8"></i><i style="left:20px;top:8px;width:11px;height:1px;background:#c9ccd1"></i><i style="left:20px;top:13px;width:9px;height:1px;background:#c9ccd1"></i><i style="left:20px;top:15px;width:9px;height:1px;background:#d5d7db"></i><i style="left:0px;top:24px;width:12px;height:2px;background:#1a1a1a"></i><i style="left:0px;top:26px;width:48px;height:1px;background:#444"></i></div>
<div class="lbl" style="left:102px;top:548.5px">Screenshot_202<br>1-12-26_04-15-<br>59.png</div>
<div class="th" style="left:264px;top:508.5px;background:#fcfcfd"><i style="left:0px;top:0px;width:48px;height:1px;background:#666"></i><i style="left:2px;top:3px;width:16px;height:21px;background:#f1f5fa"></i><i style="left:20px;top:6px;width:8px;height:1px;background:#9db7e8"></i><i style="left:20px;top:9px;width:8px;height:1px;background:#c9ccd1"></i><i style="left:20px;top:12px;width:8px;height:1px;background:#d5d7db"></i><i style="left:28px;top:8px;width:18px;height:2px;background:#333"></i><i style="left:29px;top:11px;width:16px;height:1px;background:#bbb"></i><i style="left:29px;top:13px;width:12px;height:1px;background:#ccc"></i><i style="left:29px;top:23px;width:3px;height:2px;background:#3b78e7"></i><i style="left:0px;top:26px;width:48px;height:1px;background:#444"></i></div>
<div class="lbl" style="left:226px;top:548.5px">Screenshot_202<br>1-12-26_04-20-<br>47.png</div>
<div class="th" style="left:388px;top:508.5px;background:#fcfcfd"><i style="left:0px;top:0px;width:48px;height:1px;background:#666"></i><i style="left:2px;top:3px;width:16px;height:21px;background:#f1f5fa"></i><i style="left:20px;top:3px;width:18px;height:2px;background:#555"></i><i style="left:21px;top:7px;width:16px;height:1px;background:#c6c8cc"></i><i style="left:21px;top:9px;width:16px;height:1px;background:#d0d2d6"></i><i style="left:21px;top:11px;width:15px;height:1px;background:#c6c8cc"></i><i style="left:21px;top:13px;width:16px;height:1px;background:#d0d2d6"></i><i style="left:21px;top:15px;width:14px;height:1px;background:#c6c8cc"></i><i style="left:21px;top:18px;width:16px;height:1px;background:#d0d2d6"></i><i style="left:21px;top:20px;width:13px;height:1px;background:#c6c8cc"></i><i style="left:3px;top:7px;width:2px;height:1px;background:#3b78e7"></i><i style="left:20px;top:23px;width:3px;height:2px;background:#3b78e7"></i><i style="left:1px;top:6px;width:1px;height:2px;background:#e88a3c"></i><i style="left:46px;top:6px;width:1px;height:2px;background:#e88a3c"></i><i style="left:42px;top:24px;width:4px;height:1px;background:#e8a03c"></i><i style="left:0px;top:26px;width:48px;height:1px;background:#444"></i></div>
<div class="lbl" style="left:350px;top:548.5px">Screenshot_202<br>1-12-26_04-22-<br>43.png</div>
<div class="th" style="left:512px;top:508.5px;background:#fcfcfd"><i style="left:0px;top:0px;width:48px;height:1px;background:#666"></i><i style="left:2px;top:3px;width:16px;height:21px;background:#f1f5fa"></i><i style="left:20px;top:3px;width:18px;height:2px;background:#555"></i><i style="left:21px;top:7px;width:16px;height:1px;background:#c6c8cc"></i><i style="left:21px;top:9px;width:16px;height:1px;background:#d0d2d6"></i><i style="left:21px;top:11px;width:15px;height:1px;background:#c6c8cc"></i><i style="left:21px;top:13px;width:16px;height:1px;background:#d0d2d6"></i><i style="left:21px;top:15px;width:14px;height:1px;background:#c6c8cc"></i><i style="left:21px;top:18px;width:16px;height:1px;background:#d0d2d6"></i><i style="left:21px;top:20px;width:13px;height:1px;background:#c6c8cc"></i><i style="left:3px;top:7px;width:2px;height:1px;background:#3b78e7"></i><i style="left:20px;top:23px;width:3px;height:2px;background:#3b78e7"></i><i style="left:1px;top:6px;width:1px;height:2px;background:#e88a3c"></i><i style="left:46px;top:6px;width:1px;height:2px;background:#e88a3c"></i><i style="left:42px;top:24px;width:4px;height:1px;background:#e8a03c"></i><i style="left:0px;top:26px;width:48px;height:1px;background:#444"></i></div>
<div class="lbl" style="left:474px;top:548.5px">Screenshot_202<br>1-12-26_04-28-<br>13.png</div>
</div>


<!-- ===== DigiDoc ===== -->
<div class="abs" id="digi" style="left:401px;top:44px;width:1025px;height:625px;background:#fff;box-shadow:0 2px 12px 1px rgba(0,0,0,.6);font-family:'Liberation Sans',sans-serif">
 <div class="tb" style="left:-2px;top:0;width:1029px;border-radius:3px 3px 0 0"><span style="left:345.500px">muu_Mälestustegevused_korraga.asice</span>
  <svg style="left:961px;top:0" width="64" height="25" viewBox="0 0 64 25" fill="none" stroke="#5b6971" stroke-width="2"><path d="M2 17.500h10"/><rect x="25.500" y="9.500" width="8" height="8"/><path d="M49 9l9 9M58 9l-9 9" stroke-width="1.800"/></svg>
 </div>
 <!-- header -->
 <div class="abs" style="left:0;top:25px;width:110px;height:65px;background:#023664"></div>
 <div class="abs" style="left:110px;top:25px;width:5px;height:65px;background:linear-gradient(90deg,rgba(0,0,0,.22),rgba(0,0,0,0))"></div>
 <!-- coat of arms -->
 <svg style="left:14.750px;top:41.900px" width="29.250" height="31.850" viewBox="0 0 30 32"><path d="M4.500 1.100C7 1.700 10 1.500 13.600.6L14.600 0l1 .6C19 1.500 22 1.700 25 1.100 26.500 3 28 5 29.300 5.800 28.800 7.200 27 7.600 26.300 7.300 26.500 10.500 26.500 14.500 27.300 17.500 28.800 20.500 28.800 23 27 25.500 24.500 28.300 20 30 14.600 32 9.500 30 5 28.300 2.500 25.500.7 23 .7 20.500 2.200 17.500 3 14.500 3 10.500 3.200 7.300 2.500 7.600.700 7.200.2 5.800 1.500 5 3 3 4.500 1.100z" fill="#a8986a"/>
  <g fill="#0b3cc0"><path transform="translate(6.250 2.850)" d="M.3.3L3.500.5 4.500 2 7 .6 9 1.200 11 .4 12.500 1.500 14.500.2 16.800 1.600 15.500 2.600 16.800 4.400 16.900 7.200H14L14.800 5.600 12 5 10.500 7.200H7.600L9.200 5.200 6.500 5 3.500 7.200H.2L.4 6 4 4.600 2.400 3.600 1.200 2.400z"/><path transform="translate(6.250 11.200)" d="M.3.3L3.500.5 4.500 2 7 .6 9 1.200 11 .4 12.500 1.500 14.500.2 16.800 1.600 15.500 2.600 16.800 4.400 16.900 7.200H14L14.800 5.600 12 5 10.500 7.200H7.600L9.200 5.200 6.500 5 3.500 7.200H.2L.4 6 4 4.600 2.400 3.600 1.200 2.400z"/><path transform="translate(6.250 19.500)" d="M.3.3L3.500.5 4.500 2 7 .6 9 1.200 11 .4 12.500 1.500 14.500.2 16.800 1.600 15.500 2.600 16.800 4.400 16.900 7.200H14L14.800 5.600 12 5 10.500 7.200H7.600L9.200 5.200 6.500 5 3.500 7.200H.2L.4 6 4 4.600 2.400 3.600 1.200 2.400z"/></g>
  <g fill="#e88a6a"><rect x="11" y="5.300" width="1" height="1.400"/><rect x="11" y="13.700" width="1" height="1.400"/><rect x="11" y="22" width="1" height="1.400"/></g></svg>
 <div class="abs nw" style="left:52px;top:50.500px;font-size:12.500px;line-height:16px;font-weight:bold;color:#fff;transform:scaleX(.77);transform-origin:0 0;letter-spacing:.3px">DIGIDOC</div>
 <!-- id card icon -->
 <svg style="left:124px;top:45px" width="34" height="24" viewBox="0 0 34 24" fill="none" stroke="#981e32" stroke-width="2"><rect x="1" y="1" width="32" height="22" rx="4"/><circle cx="10.500" cy="8.200" r="2.800"/><path d="M4.800 16.500c0-3 2-4.200 4.300-4.200h1.700c2.300 0 4 1.200 4 4.200V20"/><path d="M18.500 7.500h9.500M18.500 11h9.500"/></svg>
 <div class="abs nw" style="left:164.500px;top:44px;font-size:19px;line-height:26px;color:#111">Muu</div>
 <!-- sidebar -->
 <div class="abs" style="left:0;top:90px;width:110px;height:535px;background:#023664"></div>
 <div class="abs" style="left:0;top:90px;width:110px;height:110px;background:#fff"></div>
 <div class="abs" style="left:0;top:309px;width:110px;height:1px;background:#1d4b7a"></div>
 <div class="abs" style="left:0;top:419px;width:110px;height:1px;background:#1d4b7a"></div>
 <div class="abs" style="left:110px;top:90px;width:4px;height:536px;background:linear-gradient(90deg,rgba(0,0,0,.10),rgba(0,0,0,0))"></div>
 <!-- signature icon -->
 <svg style="left:30px;top:113px" width="50" height="40" viewBox="0 0 50 40" fill="none" stroke="#a08d62" stroke-width="2" stroke-linejoin="miter"><path d="M2 37V28c0-4 2.500-6 5.500-6s5.500 2 5.500 6v5c0 2.500 1.500 3.500 3.200 3.500s3.300-1 3.300-3.500v-1c0-1.500 1-2.300 2.300-2.300s2.200.8 2.200 2.300V36.500h8"/><path d="M15 7l4.500-4.500 4 4L19 11z"/><path d="M19 11l4.500-4.500 22 22L48 36l-7.500-2.500z"/><path d="M40.500 33.500l5-5"/></svg>
 <div class="abs nw" style="left:0;top:158px;width:152.800px;text-align:center;font-size:17.500px;line-height:24px;color:#a08d62;transform:scaleX(.72);transform-origin:0 0;letter-spacing:.2px">SIGNATURE</div>
 <!-- crypto icon -->
 <svg style="left:37px;top:225px" width="36" height="40" viewBox="0 0 36 40" fill="none" stroke="#fff" stroke-width="2"><path d="M1.500 1.500h33v24.500L18 37.500 1.500 26z"/><path d="M15.500 20.500v-3.500a4.800 4.800 0 1 1 7-4.200" /><path d="M15.500 16v6.500a2.200 2.200 0 0 0 4.400 0V16"/></svg>
 <div class="abs nw" style="left:0;top:268px;width:152.800px;text-align:center;font-size:17.500px;line-height:24px;color:#fff;transform:scaleX(.72);transform-origin:0 0;letter-spacing:.2px">CRYPTO</div>
 <!-- my eid icon -->
 <svg style="left:33px;top:337px" width="45" height="33" viewBox="0 0 45 33" fill="none" stroke="#fff" stroke-width="2"><rect x="1.500" y="1.500" width="42" height="29.500" rx="3.500"/><circle cx="13.500" cy="11.500" r="4"/><path d="M6 26v-3.500c0-3 2-4.500 4.500-4.500h6c2.500 0 4.500 1.500 4.500 4.500V27"/><path d="M24.500 9.500h13M24.500 14.500h13"/></svg>
 <div class="abs nw" style="left:0;top:378px;width:152.800px;text-align:center;font-size:17.500px;line-height:24px;color:#fff;transform:scaleX(.72);transform-origin:0 0;letter-spacing:.1px">My eID</div>
 <div class="abs nw" style="left:24px;top:598px;font-size:11.200px;line-height:16px;color:#0b73c9;text-decoration:underline;letter-spacing:-.1px">Ver. 4.2.9.97</div>
 <!-- main -->
 <div class="abs" style="left:110px;top:90px;width:915px;height:39px;background:#f1f2f4;border-bottom:1px solid #d9dbe0"></div>
 <div class="abs nw" style="left:118px;top:100px;font-size:13.400px;line-height:18px;color:#8a8c8e">Container</div>
 <div class="abs" style="left:130px;top:202px;width:870px;height:1px;background:#e4e6e9"></div>
 <div class="abs" style="left:130px;top:250px;width:870px;height:1px;background:#e4e6e9"></div>
 <div class="abs" style="left:130px;top:298px;width:870px;height:1px;background:#e4e6e9"></div>
 <div class="abs nw" style="left:130px;top:218px;font-size:15.400px;line-height:20px;color:#2a2a2a;transform:scaleX(.87);transform-origin:0 0">muu_Mälestustegevused_korraga.asice</div>
 <div class="abs nw" style="left:130px;top:266px;font-size:15.400px;line-height:20px;color:#2a2a2a;transform:scaleX(.87);transform-origin:0 0">Screenshot_2021-12-26_04-29-14_0.png</div>
 <!-- watermark -->
 <svg style="left:128px;top:360px" width="60" height="260" viewBox="0 0 60 260" fill="none" stroke="#e6f0f8" stroke-width=".8"><path d="M30 12l14-2M2 32l42 13M2 50l42 13M2 63l42 11M2 112v-14l3-3 39 12M12 94L30 140M40 88l-8 54M2 154v3M2 176c3-8 6-14 10-18 4 6 4 14 2 22 4 6 8 14 12 20 0-8 2-14 4-18 4 4 8 8 12 10M8 160c-2 8-2 16 0 22"/></svg>
 <!-- footer -->
 <div class="abs" style="left:110px;top:585px;width:915px;height:40px;background:#f7f8f9;border-top:1px solid #dbe5ee"></div>
 <div class="abs nw" style="left:132px;top:594px;font-size:12.800px;line-height:22px;color:#981e32;transform:scaleX(.74);transform-origin:0 0;letter-spacing:.3px">← CANCEL</div>
 <div class="abs" style="left:-2px;top:25px;width:2px;height:602px;background:#232d35"></div><div class="abs" style="left:1025px;top:25px;width:2px;height:602px;background:#232d35"></div><div class="abs" style="left:-2px;top:625px;width:1029px;height:2px;background:#232d35"></div>
</div>


<!-- ===== Shotwell ===== -->
<div class="abs" style="left:572px;top:74px;width:1028px;height:795px;background:#000;box-shadow:0 3px 20px 2px rgba(0,0,0,.6);border-radius:5px 5px 0 0;overflow:hidden">
 <div class="tb act" style="left:0;top:0;width:1028px"><span style="left:287px">Screenshot_2021-12-26_04-29-14_0.png (/tmp) - Shotwell</span>
  <svg style="left:956px;top:0" width="70" height="25" viewBox="0 0 70 25" fill="none" stroke="#eceeef" stroke-width="1.800"><path d="M5 17.500h10"/><rect x="29.500" y="8.500" width="9" height="9"/><path d="M53 8l10 10M63 8L53 18" stroke-width="2"/></svg>
 </div>
 <div class="abs nw" style="left:1px;top:25px;width:1025px;height:27px;background:#353535;color:#ececec;font-size:16px;line-height:28px;letter-spacing:-.15px">
  <span class="abs" style="left:9px">File</span><span class="abs" style="left:50px">Edit</span><span class="abs" style="left:93px">View</span><span class="abs" style="left:143px">Photo</span><span class="abs" style="left:201px">Help</span>
 </div>
 <!-- canvas with scaled screenshot -->
 <div class="abs" style="left:2px;top:113.250px;width:1024px;height:576px;overflow:hidden">
  <div class="desk" style="transform:scale(.64);transform-origin:0 0">
<div class="abs ffw" style="left:0;top:0;width:1600px;height:869px;background:#fff;overflow:hidden">
<div class="tb" style="left:0;top:0;width:1600px"><span style="left:482px">Aga kui ma vahepeal normaalselt - luureamet@gmail.com - Gmail — Mozilla Firefox</span>
<svg style="left:1532px;top:0" width="70" height="25" viewBox="0 0 70 25" fill="none" stroke="#5b6971" stroke-width="2"><path d="M3 17.500h10"/><rect x="28.500" y="10.500" width="7" height="7"/><path d="M31 10.500v-2.500h7.500v7.500h-3"/><path d="M52.500 8.500l9 9M61.500 8.500l-9 9" stroke-width="1.800"/></svg></div>
<div class="abs" style="left:0;top:25px;width:1600px;height:44px;background:#343434;font-size:16px;color:#f4f4f4;white-space:nowrap">
<div class="abs" style="left:722px;top:4px;width:116px;height:36px;border-radius:5px;background:#515151"></div>
<svg style="left:10px;top:14px" width="16" height="16" viewBox="0 0 16 16"><rect x=".5" y=".5" width="15" height="15" rx="2" fill="#fff"/><path d="M4.500 12V3.500h3.500a2.600 2.600 0 0 1 .8 5.100L11 12H8.800L6.800 8.800H6.300V12zM6.300 5v2.300h1.600a1.150 1.150 0 0 0 0-2.300z" fill="#1a8fe0"/><rect x="3.500" y="13" width="9" height="1.200" fill="#1a8fe0"/></svg>
<div class="abs" style="left:31px;top:13px;width:83px;height:20px;line-height:19px;overflow:hidden;-webkit-mask-image:linear-gradient(90deg,#000 57px,transparent 81px);mask-image:linear-gradient(90deg,#000 57px,transparent 81px)">Train | Rakuten</div>
<div class="abs" style="left:131px;top:13px;width:103px;height:20px;line-height:19px;overflow:hidden;-webkit-mask-image:linear-gradient(90deg,#000 77px,transparent 101px);mask-image:linear-gradient(90deg,#000 77px,transparent 101px)">Programmable</div>
<svg style="left:250px;top:14px" width="16" height="16" viewBox="0 0 16 16"><rect width="16" height="16" rx="3.500" fill="#f57c00"/><path d="M5.800 3.500h3a2.200 2.200 0 0 1 2.200 2.200v.6c0 .4.300.7.700.7.400 0 .800.300.800.800v2.500A2.700 2.700 0 0 1 9.800 13h-4A2.700 2.700 0 0 1 3.500 10.300V5.800A2.300 2.300 0 0 1 5.800 3.500z" fill="#fff"/><rect x="5.500" y="5.600" width="3.500" height="1.300" rx=".6" fill="#f57c00"/><rect x="5.500" y="9.300" width="5" height="1.300" rx=".6" fill="#f57c00"/></svg>
<div class="abs" style="left:271px;top:13px;width:83px;height:20px;line-height:19px;overflow:hidden;-webkit-mask-image:linear-gradient(90deg,#000 57px,transparent 81px);mask-image:linear-gradient(90deg,#000 57px,transparent 81px)">Siin jagan oma</div>
<svg style="left:370px;top:14px" width="16" height="16" viewBox="0 0 16 16"><rect width="16" height="16" rx="3.500" fill="#f57c00"/><path d="M5.800 3.500h3a2.200 2.200 0 0 1 2.200 2.200v.6c0 .4.300.7.700.7.400 0 .800.300.800.800v2.500A2.700 2.700 0 0 1 9.800 13h-4A2.700 2.700 0 0 1 3.500 10.300V5.800A2.300 2.300 0 0 1 5.800 3.500z" fill="#fff"/><rect x="5.500" y="5.600" width="3.500" height="1.300" rx=".6" fill="#f57c00"/><rect x="5.500" y="9.300" width="5" height="1.300" rx=".6" fill="#f57c00"/></svg>
<div class="abs" style="left:391px;top:13px;width:83px;height:20px;line-height:19px;overflow:hidden;-webkit-mask-image:linear-gradient(90deg,#000 57px,transparent 81px);mask-image:linear-gradient(90deg,#000 57px,transparent 81px)">Siin jagan oma</div>
<svg style="left:490px;top:14px" width="16" height="16" viewBox="0 0 16 16"><path d="M1 8.500c2-2 4-1 6 0s4 1.500 8-.5" stroke="#111" stroke-width="2.200" fill="none"/></svg>
<div class="abs" style="left:511px;top:13px;width:83px;height:20px;line-height:19px;overflow:hidden;-webkit-mask-image:linear-gradient(90deg,#000 57px,transparent 81px);mask-image:linear-gradient(90deg,#000 57px,transparent 81px)">Maiken Tulev</div>
<svg style="left:610px;top:14px" width="16" height="16" viewBox="0 0 16 16"><rect x="0" y="2.500" width="16" height="11" rx="3" fill="#f00"/><path d="M6.300 5.300v5.400L11 8z" fill="#fff"/></svg>
<div class="abs" style="left:631px;top:13px;width:83px;height:20px;line-height:19px;overflow:hidden;-webkit-mask-image:linear-gradient(90deg,#000 57px,transparent 81px);mask-image:linear-gradient(90deg,#000 57px,transparent 81px)">Maiken - DJ</div>
<svg style="left:730px;top:14px" width="16" height="16" viewBox="0 0 16 16"><path d="M1 3.500h2.200L8 7.200l4.800-3.700H15v9.500h-2.400V6.800L8 10.300 3.400 6.800V13H1z" fill="#ea4335"/><path d="M1 3.500h1.200V13H1z" fill="#4285f4"/><path d="M1 11h2.400v2H1z" fill="#4285f4"/><path d="M12.600 6.800L15 4.500V13h-2.400z" fill="#34a853"/><path d="M12.600 4.200L15 3.500v2l-2.400 1.800z" fill="#fbbc04"/></svg>
<div class="abs" style="left:751px;top:13px;width:62px;height:20px;line-height:19px;overflow:hidden;-webkit-mask-image:linear-gradient(90deg,#000 36px,transparent 60px);mask-image:linear-gradient(90deg,#000 36px,transparent 60px)">Aga kui ma</div>
<div class="abs" style="left:851px;top:13px;width:103px;height:20px;line-height:19px;overflow:hidden;-webkit-mask-image:linear-gradient(90deg,#000 77px,transparent 101px);mask-image:linear-gradient(90deg,#000 77px,transparent 101px)">Messages</div>
<svg style="left:970px;top:14px" width="16" height="16" viewBox="0 0 16 16"><path d="M9.500 1c2 2 2.500 5 1.500 8.500-.6 2-1.500 4-3.500 5.500-.5-1-.8-2-.8-3.500C6.700 8 7.500 4 9.500 1z" fill="#f3d36a"/></svg>
<div class="abs" style="left:991px;top:13px;width:83px;height:20px;line-height:19px;overflow:hidden;-webkit-mask-image:linear-gradient(90deg,#000 57px,transparent 81px);mask-image:linear-gradient(90deg,#000 57px,transparent 81px)">Linux Lite - </div>
<div class="abs" style="left:1091px;top:13px;width:103px;height:20px;line-height:19px;overflow:hidden;-webkit-mask-image:linear-gradient(90deg,#000 77px,transparent 101px);mask-image:linear-gradient(90deg,#000 77px,transparent 101px)">/home/human/</div>
<svg style="left:1210px;top:14px" width="16" height="16" viewBox="0 0 16 16"><rect x=".5" y=".5" width="15" height="15" rx="2" fill="#fff"/><path d="M4.500 12V3.500h3.500a2.600 2.600 0 0 1 .8 5.100L11 12H8.800L6.800 8.800H6.300V12zM6.300 5v2.300h1.600a1.150 1.150 0 0 0 0-2.300z" fill="#1a8fe0"/><rect x="3.500" y="13" width="9" height="1.200" fill="#1a8fe0"/></svg>
<div class="abs" style="left:1231px;top:13px;width:83px;height:20px;line-height:19px;overflow:hidden;-webkit-mask-image:linear-gradient(90deg,#000 57px,transparent 81px);mask-image:linear-gradient(90deg,#000 57px,transparent 81px)">Train - Episode</div>
<svg style="left:1330px;top:14px" width="16" height="16" viewBox="0 0 16 16"><circle cx="8" cy="8" r="8" fill="#fff"/><path d="M13.300 8.100c0-.4 0-.7-.1-1.100H8v2.100h3c-.15.700-.5 1.300-1.100 1.700v1.400h1.800c1-1 1.600-2.400 1.600-4.100z" fill="#4285f4"/><path d="M8 13.500c1.500 0 2.700-.5 3.600-1.300L9.900 10.800c-.5.300-1.100.5-1.900.5-1.400 0-2.600-1-3.100-2.300H3.100v1.400A5.500 5.500 0 0 0 8 13.500z" fill="#34a853"/><path d="M4.900 9c-.2-.7-.2-1.400 0-2V5.600H3.100a5.500 5.500 0 0 0 0 4.800z" fill="#fbbc04"/><path d="M8 4.700c.8 0 1.500.3 2.100.8l1.500-1.500A5.500 5.500 0 0 0 3.100 5.600L4.900 7C5.400 5.700 6.600 4.700 8 4.700z" fill="#ea4335"/></svg>
<div class="abs" style="left:1351px;top:13px;width:83px;height:20px;line-height:19px;overflow:hidden;-webkit-mask-image:linear-gradient(90deg,#000 57px,transparent 81px);mask-image:linear-gradient(90deg,#000 57px,transparent 81px)">youtube-dl</div>
<svg style="left:1450px;top:14px" width="16" height="16" viewBox="0 0 16 16" fill="none" stroke="#f2f2f2" stroke-width="1.400"><circle cx="8" cy="8" r="6.600"/><path d="M8 7v4.500M8 4.300v1.400"/></svg>
<div class="abs" style="left:1471px;top:13px;width:83px;height:20px;line-height:19px;overflow:hidden;-webkit-mask-image:linear-gradient(90deg,#000 57px,transparent 81px);mask-image:linear-gradient(90deg,#000 57px,transparent 81px)">Server Not F</div>
<svg style="left:818px;top:17px" width="10" height="10" viewBox="0 0 10 10" stroke="#f2f2f2" stroke-width="1.300"><path d="M1 1l8 8M9 1l-8 8"/></svg>
<svg style="left:1572px;top:15px" width="14" height="14" viewBox="0 0 14 14" fill="none" stroke="#f2f2f2" stroke-width="1.500"><path d="M7 .5v13M.5 7h13"/></svg>
</div>
<div class="abs" style="left:0;top:69px;width:1600px;height:40px;background:#515151;border-top:1px solid #3e3e3e;border-bottom:1px solid #2f2f2f">
<svg style="left:15px;top:11px" width="18" height="18" viewBox="0 0 18 18" fill="none" stroke="#f0f0f0" stroke-width="1.700" stroke-linecap="round" stroke-linejoin="round"><path d="M16 9H2.500M8 3L2 9l6 6"/></svg>
<svg style="left:52px;top:11px" width="18" height="18" viewBox="0 0 18 18" fill="none" stroke="#f0f0f0" stroke-width="1.700" stroke-linecap="round" stroke-linejoin="round" opacity=".42"><path d="M2 9h13.500M10 3l6 6-6 6"/></svg>
<svg style="left:87px;top:10px" width="18" height="18" viewBox="0 0 18 18" fill="none" stroke="#f0f0f0" stroke-width="1.700" stroke-linecap="round" stroke-linejoin="round"><path d="M15.500 9.500a6.500 6.500 0 1 1-2-5.200"/><path d="M15.800 2v4.200h-4.200"/></svg>
<svg style="left:122px;top:10px" width="18" height="18" viewBox="0 0 18 18" fill="none" stroke="#f0f0f0" stroke-width="1.700" stroke-linecap="round" stroke-linejoin="round"><path d="M2 9l7-6.500L16 9M4 8v8h3.800v-5h2.400v5H14V8"/></svg>
<div class="abs" style="left:236px;top:4px;width:746px;height:31px;border-radius:4px;background:#2b2b2b"></div>
<svg style="left:243px;top:10px" width="18" height="18" viewBox="0 0 18 18" fill="none" stroke="#f0f0f0" stroke-width="1.700" stroke-linecap="round" stroke-linejoin="round" stroke-width="1.500"><path d="M9 1.500c2 1.300 4 1.800 6.500 2 0 6-2 10.500-6.500 13C4.500 14 2.500 9.500 2.500 3.500 5 3.300 7 2.800 9 1.500z"/></svg>
<svg style="left:271px;top:9px" width="16" height="19" viewBox="0 0 16 19" fill="none" stroke="#f0f0f0" stroke-width="1.700" stroke-linecap="round" stroke-linejoin="round" stroke-width="1.600"><rect x="2.500" y="8.500" width="11" height="8.500" rx="1.500"/><path d="M4.800 8.500V5.500a3.200 3.200 0 0 1 6.400 0v3"/></svg>
<svg style="left:296px;top:11px" width="20" height="16" viewBox="0 0 20 16" fill="none" stroke="#f0f0f0" stroke-width="1.700" stroke-linecap="round" stroke-linejoin="round" stroke-width="1.500"><path d="M2 4.500h9M15.500 4.500H18M2 11.500h2.500M9 11.500h9"/><circle cx="13.200" cy="4.500" r="2"/><circle cx="6.800" cy="11.500" r="2"/></svg>
<div class="abs nw" style="left:325.500px;top:8px;font-size:17.300px;line-height:22px;color:#a9a9a9">https://mail.<span style="color:#fbfbfb">google.com</span>/mail/u/0/#sent/KtbxLwgwzlLbbjWfJMbJvJzrsGJVCtCZSq</div>
<svg style="left:957px;top:9px" width="20" height="20" viewBox="0 0 20 20" fill="none" stroke="#f0f0f0" stroke-width="1.700" stroke-linecap="round" stroke-linejoin="round" stroke-width="1.500"><path d="M10 2.200l2.400 5 5.400.7-4 3.800 1 5.500-4.800-2.700-4.800 2.700 1-5.500-4-3.800 5.400-.7z"/></svg>
<div class="abs" style="left:994px;top:4px;width:298px;height:31px;border-radius:4px;background:#2b2b2b"></div>
<svg style="left:1001px;top:11px" width="17" height="17" viewBox="0 0 17 17" fill="none" stroke="#f0f0f0" stroke-width="1.700" stroke-linecap="round" stroke-linejoin="round" stroke-width="1.700"><circle cx="7" cy="7" r="5"/><path d="M11 11l4.500 4.500"/></svg>
<div class="abs nw" style="left:1025px;top:8px;font-size:16.500px;line-height:22px;color:#f4f4f4">"Andrus Muld"</div>
<svg style="left:1267px;top:11px" width="18" height="18" viewBox="0 0 18 18" fill="none" stroke="#f0f0f0" stroke-width="1.700" stroke-linecap="round" stroke-linejoin="round" stroke-width="1.500"><path d="M2 9h13.500M10 3.500L15.500 9 10 14.500"/></svg>
<svg style="left:1386px;top:10px" width="18" height="18" viewBox="0 0 18 18" fill="none" stroke="#f0f0f0" stroke-width="1.700" stroke-linecap="round" stroke-linejoin="round" stroke-width="1.500"><path d="M2 3.500h14v5a7 7 0 0 1-14 0z"/><path d="M5.800 7.500L9 10.500l3.200-3"/></svg>
<svg style="left:1422px;top:9px" width="18" height="20" viewBox="0 0 18 20" fill="none" stroke="#2f6fd0" stroke-width="1.700" stroke-linecap="round"><path d="M9 2v10M4.500 8L9 12.500 13.500 8M2 17.500h14"/></svg>
<svg style="left:1457px;top:9px" width="20" height="21" viewBox="0 0 20 21"><path d="M10 1c2.500 1.500 5 2 8 2.200 0 8-2.500 13.500-8 16.800C4.500 16.700 2 11.200 2 3.200 5 3 7.500 2.500 10 1z" fill="#9a9a9a"/><text x="10" y="12.500" font-size="6.500" font-weight="bold" text-anchor="middle" fill="#fff" font-family="Liberation Sans,sans-serif">uD</text></svg>
<svg style="left:1494px;top:11px" width="20" height="16" viewBox="0 0 20 16"><path d="M2 2l4 3h8l4-3v7c0 4-3.500 6.500-8 6.500S2 13 2 9z" fill="#f4f4f4"/><circle cx="7" cy="9.500" r="1.700" fill="#515151"/><circle cx="13" cy="9.500" r="1.700" fill="#515151"/></svg>
<svg style="left:1530px;top:11px" width="20" height="18" viewBox="0 0 20 18"><path d="M1 1h18l-7 8v7l-4-2.500V9z" fill="#3c3c3c"/></svg>
<svg style="left:1567px;top:11px" width="18" height="16" viewBox="0 0 18 16" fill="none" stroke="#f0f0f0" stroke-width="1.700" stroke-linecap="round" stroke-linejoin="round" stroke-width="1.700"><path d="M1.500 2.500h15M1.500 8h15M1.500 13.500h15"/></svg>
</div>
<div class="abs gm" style="left:0;top:109px;width:1600px;height:759px;background:#fff;color:#222">
 <!-- header -->
 <svg style="left:26px;top:26px" width="20" height="16" viewBox="0 0 20 16" stroke="#5f6368" stroke-width="2"><path d="M0 2h20M0 8h20M0 14h20"/></svg>
 <svg style="left:64px;top:20.500px" width="38" height="28" viewBox="0 0 38 28"><path d="M1 4.500v21a1.500 1.500 0 0 0 1.500 1.500H8V11z" fill="#4285f4"/><path d="M37 4.500v21a1.500 1.500 0 0 1-1.500 1.500H30V11z" fill="#34a853"/><path d="M30 3.500l3-2.300a2.500 2.500 0 0 1 4 2V7L30 12z" fill="#fbbc04"/><path d="M8 3.500L5 1.200a2.500 2.500 0 0 0-4 2V7l7 5z" fill="#c5221f"/><path d="M8 3.500V12l11 8.200L30 12V3.500L19 11.700z" fill="#ea4335"/></svg>
 <div class="abs nw" style="left:115px;top:19.500px;font-size:23.500px;line-height:30px;color:#5f6368;letter-spacing:-.3px">Gmail</div>
 <div class="abs" style="left:256px;top:9px;width:720px;height:46px;border-radius:8px;background:#f1f3f4"></div>
 <svg style="left:273px;top:22.500px" width="22" height="22" viewBox="0 0 22 22" fill="none" stroke="#5f6368" stroke-width="2.200"><circle cx="8.500" cy="8.500" r="6"/><path d="M13 13l7 7"/></svg>
 <div class="abs nw" style="left:312px;top:23.500px;font-size:16px;line-height:22px;color:#202124">in:sent</div>
 <div class="abs" style="left:0;top:63px;width:1600px;height:1px;background:#eceff1"></div>
 <!-- left rail -->
 <div class="abs" style="left:8px;top:77px;width:56px;height:56px;border-radius:50%;background:#fff;box-shadow:0 1px 3px rgba(60,64,67,.4),0 2px 7px 1px rgba(60,64,67,.18)"></div>
 <svg style="left:22px;top:91px" width="28" height="28" viewBox="0 0 28 28"><path d="M12.500 2h3v10.500h-3z" fill="#ea4335"/><path d="M12.500 15.500h3V26h-3z" fill="#34a853"/><path d="M2 12.500h10.500v3H2z" fill="#fbbc04"/><path d="M15.500 12.500H26v3H15.500z" fill="#4285f4"/></svg>

 <svg style="left:26px;top:151px" width="20" height="20" viewBox="0 0 24 24"><path d="M19 3H5c-1.100 0-2 .9-2 2v14c0 1.100.9 2 2 2h14c1.100 0 2-.9 2-2V5c0-1.100-.9-2-2-2zm0 12h-4c0 1.660-1.350 3-3 3s-3-1.340-3-3H5V5h14v10z" fill="#5f6368"/></svg>
 <div class="abs nw" style="left:20px;top:145px;width:40px;height:20px;border-radius:10px;background:#c5221f;color:#fff;font-size:11.500px;line-height:20px;text-align:center">3 174</div>
 <svg style="left:26px;top:183px" width="20" height="20" viewBox="0 0 24 24"><path d="M12 17.270L18.180 21l-1.640-7.030L22 9.240l-7.190-.61L12 2 9.190 8.630 2 9.240l5.460 4.730L5.820 21z" fill="#5f6368"/></svg>
 <svg style="left:26px;top:215px" width="20" height="20" viewBox="0 0 24 24"><path d="M12 2a10 10 0 1 0 0 20 10 10 0 0 0 0-20zm4.200 14.200L11 13V7h1.500v5.200l4.500 2.700z" fill="#5f6368"/></svg>
 <svg style="left:26px;top:247px" width="20" height="20" viewBox="0 0 24 24"><path d="M12 2a9 9 0 0 0-1.500 17.900V23l4-3.400A9 9 0 0 0 12 2zM11 12l-1 2H8.500l1-2H7V8h4zm6 0l-1 2h-1.500l1-2H13V8h4z" fill="#5f6368"/></svg>
 <div class="abs" style="left:20px;top:273px;width:32px;height:32px;border-radius:50%;background:#e8eaed"></div>
 <svg style="left:26px;top:279px" width="20" height="20" viewBox="0 0 24 24"><path d="M2.010 21L23 12 2.010 3 2 10l15 2-15 2z" fill="#3c4043"/></svg>
 <svg style="left:26px;top:311px" width="20" height="20" viewBox="0 0 24 24"><path d="M14 2H6c-1.100 0-2 .9-2 2v16c0 1.100.9 2 2 2h12c1.100 0 2-.9 2-2V8l-6-6zm-1 7V3.500L18.500 9H13z" fill="#5f6368"/></svg>
 <div class="abs" style="left:43px;top:308px;width:9px;height:9px;border-radius:50%;background:#d93025"></div>
 <svg style="left:26px;top:343px" width="20" height="20" viewBox="0 0 24 24"><path d="M20 4H4c-1.100 0-2 .9-2 2v12c0 1.100.9 2 2 2h16c1.100 0 2-.9 2-2V6c0-1.100-.9-2-2-2zm0 4l-8 5-8-5V6l8 5 8-5v2z" fill="#5f6368"/></svg>
 <svg style="left:26px;top:375px" width="20" height="20" viewBox="0 0 24 24"><path d="M17.630 5.840C17.270 5.330 16.670 5 16 5L5 5.010C3.900 5.010 3 5.900 3 7v10c0 1.100.9 1.990 2 1.990L16 19c.67 0 1.270-.33 1.630-.84L22 12l-4.370-6.160z" fill="#5f6368"/></svg>
 <div class="abs" style="left:26px;top:411px;width:16px;height:2px;background:#5f6368"></div>
 <div class="abs" style="left:43px;top:404px;width:9px;height:9px;border-radius:50%;background:#d93025"></div>
 <div class="abs" style="left:0;top:413px;width:72px;height:1px;background:#e0e0e0"></div>
 <svg style="left:26px;top:427px" width="20" height="20" viewBox="0 0 24 24" fill="none" stroke="#5f6368" stroke-width="2" stroke-linejoin="round"><path d="M4 6h9.500c1.400 0 2.500 1.100 2.500 2.500v7c0 1.400-1.100 2.500-2.500 2.500H4z" /><path d="M16 10.500l5-4v11l-5-4"/></svg>
 <svg style="left:26px;top:459px" width="20" height="20" viewBox="0 0 24 24"><path d="M17 10.500V7c0-.55-.45-1-1-1H4c-.55 0-1 .45-1 1v10c0 .55.450 1 1 1h12c.55 0 1-.45 1-1v-3.500l4 4v-11l-4 4z" fill="#5f6368"/></svg>
 <svg style="left:26px;top:491px" width="20" height="20" viewBox="0 0 24 24"><path d="M20 5H4c-1.100 0-1.990.9-1.990 2L2 17c0 1.100.9 2 2 2h16c1.100 0 2-.9 2-2V7c0-1.100-.9-2-2-2zm-9 3h2v2h-2V8zm0 3h2v2h-2v-2zM8 8h2v2H8V8zm0 3h2v2H8v-2zm-1 2H5v-2h2v2zm0-3H5V8h2v2zm9 7H8v-2h8v2zm0-4h-2v-2h2v2zm0-3h-2V8h2v2zm3 3h-2v-2h2v2zm0-3h-2V8h2v2z" fill="#5f6368"/></svg>
 <div class="abs" style="left:0;top:524px;width:72px;height:1px;background:#e0e0e0"></div>
 <svg style="left:26px;top:538px" width="20" height="22" viewBox="0 0 24 26"><path d="M12 2a9 9 0 0 0-1.500 17.900V24l4-4.400A9 9 0 0 0 12 2zM11 12l-1 2H8.500l1-2H7V8h4zm6 0l-1 2h-1.500l1-2H13V8h4z" fill="#5f6368"/></svg>
 <div class="abs" style="left:23px;top:565px;width:28px;height:28px;border-radius:50%;background:#ef6c00;color:#fff;font-size:15px;line-height:28px;text-align:center">T</div>
 <div class="abs" style="left:23px;top:603px;width:33px;height:1px;background:#e0e0e0"></div>
 <div class="abs" style="left:23px;top:612px;width:28px;height:28px;border-radius:50%;background:#ef6c00;color:#fff;font-size:15px;line-height:28px;text-align:center">M</div>
 <!-- message: avatar + text (toolbar overlays top) -->
 <div class="abs" style="left:88px;top:98px;width:40px;height:40px;border-radius:50%;background:#eff0f1;border:1px solid #e6e7e8"></div>
 <svg style="left:98px;top:106px" width="20" height="20" viewBox="0 0 24 24"><path d="M12 12c2.210 0 4-1.790 4-4s-1.790-4-4-4-4 1.790-4 4 1.790 4 4 4zm0 2c-2.670 0-8 1.340-8 4v2h16v-2c0-2.660-5.330-4-8-4z" fill="#d5d7da"/></svg>
 <div class="abs nw" style="left:144px;top:119px;font-size:12.400px;line-height:18px;color:#777">saajale Maiken, pimekoopia: maiken.tulev</div>
 <svg style="left:386px;top:127px" width="8" height="5" viewBox="0 0 8 5"><path d="M0 0h8L4 4.500z" fill="#777"/></svg>
 <div class="abs nw" style="left:144px;top:145.800px;font-size:13px;line-height:19.750px;color:#222">mõned korrad õigeluuleliselt &nbsp;, mul see kiri vähem oluline kui teised<br>lühiajaliselt takerdatustena patustamatudena lühidalt öeldes see<br>mis ma n...<br>Oeh, peaaegu läks selgeks.,</div>
 <div class="abs" style="left:144px;top:258px;width:900px;height:0;border-top:1px dotted #d8d8d8"></div>
 <!-- toolbar -->
 <div class="abs" style="left:72px;top:64px;width:1528px;height:47px;background:#fff;border-bottom:1px solid #eceff1"></div>
 <svg style="left:88px;top:79px" width="20" height="20" viewBox="0 0 24 24"><path d="M20 11H7.830l5.590-5.590L12 4l-8 8 8 8 1.410-1.410L7.830 13H20v-2z" fill="#5f6368"/></svg>
 <svg style="left:144px;top:79px" width="20" height="20" viewBox="0 0 24 24"><path d="M20.540 5.230l-1.390-1.680C18.880 3.210 18.470 3 18 3H6c-.47 0-.88.210-1.160.55L3.460 5.230C3.170 5.570 3 6.020 3 6.500V19c0 1.100.9 2 2 2h14c1.100 0 2-.9 2-2V6.500c0-.48-.17-.93-.46-1.270zM12 17.500L6.500 12H10v-2h4v2h3.500L12 17.500zM5.120 5l.81-1h12l.94 1H5.120z" fill="#5f6368"/></svg>
 <svg style="left:188px;top:79px" width="20" height="20" viewBox="0 0 24 24"><path d="M15.730 3H8.270L3 8.270v7.460L8.270 21h7.460L21 15.730V8.270L15.730 3zM12 17.300c-.72 0-1.300-.58-1.300-1.300s.58-1.300 1.300-1.300 1.300.58 1.300 1.300-.58 1.300-1.300 1.300zm1-4.300h-2V7h2v6z" fill="#5f6368"/></svg>
 <svg style="left:232px;top:79px" width="20" height="20" viewBox="0 0 24 24"><path d="M6 19c0 1.100.9 2 2 2h8c1.100 0 2-.9 2-2V7H6v12zM19 4h-3.500l-1-1h-5l-1 1H5v2h14V4z" fill="#5f6368"/></svg>
 <div class="abs" style="left:270px;top:78px;width:1px;height:20px;background:#e3e5e8"></div>
 <svg style="left:291px;top:78px" width="22" height="22" viewBox="0 0 24 24" fill="none" stroke="#5f6368" stroke-width="1.800" stroke-linejoin="round"><path d="M3 9.500L12 4l9 5.500V19a1 1 0 0 1-1 1H4a1 1 0 0 1-1-1z"/><path d="M5.500 11.500v-2h13v2L12 15.500z" fill="#5f6368"/></svg>
 <svg style="left:336px;top:79px" width="20" height="20" viewBox="0 0 24 24"><path d="M12 2a10 10 0 1 0 0 20 10 10 0 0 0 0-20zm4.200 14.200L11 13V7h1.500v5.200l4.500 2.700z" fill="#5f6368"/></svg>
 <svg style="left:379px;top:78px" width="22" height="22" viewBox="0 0 24 24"><path d="M11 2a9 9 0 1 0 8.500 12h-.1a6 6 0 0 1-.9-10.400A9 9 0 0 0 11 2zm-1.500 13.500L5 11l1.400-1.400 3.100 3.100 6.600-6.600L17.500 7.500z" fill="#5f6368"/><path d="M20 15.500h1.600v2.400H24v1.600h-2.400V22H20v-2.500h-2.400v-1.600H20z" fill="#5f6368"/></svg>
 <!-- inline image -->
 <div class="abs" style="left:144px;top:277px;width:180px;height:120px;background:#fff;overflow:hidden">
  <div class="abs" style="left:0;top:0;width:180px;height:15px;background:#333"></div><div class="abs" style="left:0;top:0;width:180px;height:4px;background:#222"></div><div class="abs" style="left:0;top:10px;width:180px;height:5px;background:#444"></div>
  <div class="abs" style="left:0;top:8px;width:180px;height:1px;background:#6a6a6a"></div>
  <div class="abs" style="left:0;top:15px;width:180px;height:14px;background:#fff"></div>
  <div class="abs" style="left:18px;top:17px;width:96px;height:5px;background:#eef1f5"></div>
  <div class="abs" style="left:3px;top:29px;width:60px;height:72px;background:#f0f5fc"></div>
  <div class="abs" style="left:124px;top:29px;width:56px;height:72px;background:#f3f7fd"></div>
  <div class="abs" style="left:68px;top:58px;width:52px;height:18px;border:1px solid #e4e6ea"></div>
  <div class="abs" style="left:74px;top:35px;width:40px;height:1px;background:#9db7e8"></div>
  <div class="abs" style="left:74px;top:40px;width:42px;height:1px;background:#aaa"></div>
  <div class="abs" style="left:74px;top:45px;width:36px;height:1px;background:#9db7e8"></div>
  <div class="abs" style="left:74px;top:49px;width:40px;height:1px;background:#aaa"></div>
  <div class="abs" style="left:72px;top:63px;width:40px;height:1px;background:#888"></div>
  <div class="abs" style="left:72px;top:68px;width:44px;height:1px;background:#aaa"></div>
  <div class="abs" style="left:0;top:106px;width:40px;height:7px;background:#111"></div>
  <div class="abs" style="left:0;top:116px;width:162px;height:4px;background:#2a2a2a"></div>
  <svg style="left:144px;top:100px" width="36" height="20" viewBox="0 0 36 20"><path d="M0 20h18L36 2V0H20z" fill="#fff"/><path d="M0 20L17 3l-1 17z" fill="#c8c8c8"/><path d="M16 20h2L36 2V0H20l-3 3z" fill="#f4f4f4"/></svg>
 </div>
 <!-- reply / compose -->
 <div class="abs" style="left:88px;top:456px;width:40px;height:40px;border-radius:50%;background:#eff0f1;border:1px solid #e8e9ea"></div>
 <svg style="left:97px;top:464px" width="22" height="22" viewBox="0 0 24 24"><path d="M12 12c2.210 0 4-1.790 4-4s-1.790-4-4-4-4 1.790-4 4 1.790 4 4 4zm0 2c-2.670 0-8 1.340-8 4v2h16v-2c0-2.660-5.330-4-8-4z" fill="#5f6368"/></svg>
 <div class="abs" style="left:136px;top:449px;width:1450px;height:271px;border:1px solid #dadce0;border-radius:8px;box-shadow:0 1px 2px rgba(0,0,0,.08)"></div>
 <svg style="left:153px;top:464px" width="20" height="20" viewBox="0 0 24 24"><path d="M10 9V5l-7 7 7 7v-4.100c5 0 8.500 1.600 11 5.100-1-5-4-10-11-11z" fill="#5f6368"/></svg>
 <svg style="left:178px;top:472px" width="9" height="5" viewBox="0 0 9 5"><path d="M0 0h9L4.500 4.500z" fill="#5f6368"/></svg>
 <div class="abs nw" style="left:201px;top:463px;font-size:14.300px;line-height:20px;color:#777">Maiken Tulev</div>
 <div class="abs nw" style="left:153px;top:498px;font-size:13px;line-height:18px;color:#222">Jutu m</div>
 <div class="abs" style="left:153px;top:599px;width:24px;height:10px;border-radius:5px;background:#e8eaed"></div>
 <div class="abs" style="left:157.500px;top:602.500px;width:3px;height:3px;border-radius:50%;background:#5f6368;box-shadow:6px 0 0 #5f6368,12px 0 0 #5f6368"></div>
 <div class="abs" style="left:153px;top:618px;width:1400px;height:32px;background:#f5f5f5"></div>
 <div class="abs nw" style="left:162px;top:624px;font-size:13.300px;line-height:20px;color:#15c;font-weight:bold">Aga kui ma vahepeal normaalselt.asice <span style="color:#777;font-weight:normal">(196 kB)</span></div>
 <div class="abs" style="left:153px;top:669px;width:98px;height:37px;border-radius:4px;background:#1a73e8"></div>
 <div class="abs" style="left:226px;top:669px;width:1px;height:37px;background:#1660c6"></div>
 <div class="abs nw" style="left:168.500px;top:677.500px;font-size:15px;line-height:20px;color:#fff;letter-spacing:.25px;-webkit-text-stroke:.45px #fff;transform:scaleX(.92);transform-origin:0 0">Saada</div>
 <svg style="left:233px;top:685px" width="10" height="6" viewBox="0 0 10 6"><path d="M0 0h10L5 5.500z" fill="#fff"/></svg>
 <!-- A format -->
 <svg style="left:262px;top:678px" width="22" height="22" viewBox="0 0 24 24"><path d="M3 21.500h18v-1.800H3zM5.500 17h2.200l1.300-3.600h6l1.300 3.600h2.200L13 3h-2zm4.200-5.500L12 5.300l2.300 6.200z" fill="#5f6368"/></svg>
 <!-- clip -->
 <svg style="left:295px;top:677px" width="20" height="24" viewBox="0 0 20 24" fill="none" stroke="#5f6368" stroke-width="1.800"><path d="M3 2.500h9.500L17 7v14.500H3z" stroke-linejoin="round"/><path d="M7.500 10v6a2.500 2.500 0 0 0 5 0V9.500a1.500 1.500 0 0 0-3 0V16"/></svg>
 <!-- link -->
 <svg style="left:325px;top:678px" width="22" height="22" viewBox="0 0 24 24"><path d="M3.900 12c0-1.710 1.390-3.100 3.100-3.100h4V7H7c-2.760 0-5 2.240-5 5s2.240 5 5 5h4v-1.900H7c-1.710 0-3.100-1.390-3.100-3.100zM8 13h8v-2H8v2zm9-6h-4v1.900h4c1.710 0 3.100 1.390 3.100 3.100s-1.390 3.100-3.100 3.100h-4V17h4c2.760 0 5-2.240 5-5s-2.240-5-5-5z" fill="#5f6368"/></svg>
 <!-- emoji -->
 <svg style="left:358px;top:678px" width="22" height="22" viewBox="0 0 24 24"><circle cx="12" cy="12" r="9.200" fill="none" stroke="#5f6368" stroke-width="1.900"/><circle cx="8.600" cy="9.500" r="1.500" fill="#5f6368"/><circle cx="15.400" cy="9.500" r="1.500" fill="#5f6368"/><path d="M6.800 13.500h10.400a5.300 5.300 0 0 1-10.400 0z" fill="#5f6368"/></svg>
 <!-- drive -->
 <svg style="left:389px;top:678px" width="22" height="22" viewBox="0 0 24 24" fill="none" stroke="#5f6368" stroke-width="1.900" stroke-linejoin="round"><path d="M9 3.500h6l7 12-3 5H5l-3-5z"/><path d="M12 10.500l-3 5h6z"/></svg>
 <!-- image -->
 <svg style="left:421px;top:678px" width="22" height="22" viewBox="0 0 24 24"><path d="M21 19V5c0-1.100-.9-2-2-2H5c-1.100 0-2 .9-2 2v14c0 1.100.9 2 2 2h14c1.100 0 2-.9 2-2zM8.500 13.500l2.500 3.010L14.500 12l4.500 6H5l3.500-4.500z" fill="#5f6368"/></svg>
 <!-- lock clock -->
 <svg style="left:453px;top:677px" width="24" height="24" viewBox="0 0 24 24"><path d="M4 9h1.500V6.500a4 4 0 0 1 8 0V9H15v1.200A7 7 0 0 0 9.300 21H4a1.500 1.500 0 0 1-1.500-1.500v-9A1.500 1.500 0 0 1 4 9zm3.200 0h4.600V6.500a2.300 2.300 0 0 0-4.600 0z" fill="#5f6368"/><circle cx="16" cy="16.500" r="5.600" fill="none" stroke="#5f6368" stroke-width="1.800"/><path d="M16 13.300v3.500l2.300 1.400" fill="none" stroke="#5f6368" stroke-width="1.500"/></svg>
 <!-- pen -->
 <svg style="left:486px;top:677px" width="22" height="24" viewBox="0 0 22 24"><path d="M2 22l1.200-5.500L13 6.500l3.800 3.800L7 20.300zM14 5.300l2.300-2.300a1.600 1.600 0 0 1 2.300 0l1.700 1.700a1.600 1.600 0 0 1 0 2.300L18 9.300z" fill="#5f6368"/></svg>

</div>

</div>

<div class="abs thn" style="left:422px;top:125px;width:1177px;height:744px;background:#2f2f2f;box-shadow:0 3px 14px 1px rgba(0,0,0,.55);border-radius:5px 5px 0 0;overflow:hidden;color:#ececec;font-size:16px">
<div class="tb act" style="left:0;top:0;width:1177px"><span style="left:463px">kohtusaaga - File Manager</span>
<svg style="left:1107px;top:0" width="70" height="25" viewBox="0 0 70 25" fill="none" stroke="#eceeef" stroke-width="1.800"><path d="M5 17.500h10"/><rect x="29.500" y="8.500" width="9" height="9"/><path d="M53 8l10 10M63 8L53 18" stroke-width="2"/></svg></div>
<div class="abs nw" style="left:0;top:25px;width:1177px;height:69px;background:#353535;line-height:26px;letter-spacing:-.15px">
<span class="abs" style="left:10px;top:0">File</span>
<span class="abs" style="left:52px;top:0">Edit</span>
<span class="abs" style="left:95px;top:0">View</span>
<span class="abs" style="left:144px;top:0">Go</span>
<span class="abs" style="left:180px;top:0">Help</span>
<svg style="left:16px;top:37px" width="22" height="22" viewBox="0 0 22 22" fill="none" stroke="#f4f4f4" stroke-width="3.200" stroke-linecap="butt" stroke-linejoin="miter"><path d="M20 11H5M11.500 3L3.500 11l8 8"/></svg>
<svg style="left:60px;top:37px" width="22" height="22" viewBox="0 0 22 22" fill="none" stroke="#f4f4f4" stroke-width="3.200" stroke-linecap="butt" stroke-linejoin="miter" opacity=".4"><path d="M2 11h15M10.500 3l8 8-8 8"/></svg>
<svg style="left:107px;top:37px" width="22" height="22" viewBox="0 0 22 22" fill="none" stroke="#f4f4f4" stroke-width="3.200" stroke-linecap="butt" stroke-linejoin="miter"><path d="M11 20V5M3 11.500l8-8 8 8"/></svg>
<svg style="left:151px;top:37px" width="22" height="22" viewBox="0 0 22 22"><path d="M11 2L1 11.500h3V20h5v-6h4v6h5v-8.500h3L17.500 8V3.500h-3v1.800z" fill="#f4f4f4"/></svg>
<div class="abs" style="left:186px;top:31px;width:985px;height:34px;border-radius:4px;background:#2e2e2e;border:1px solid #262626"></div>
<svg style="left:195px;top:40px" width="18" height="16" viewBox="0 0 18 16"><path d="M0 2a1.500 1.500 0 0 1 1.500-1.500H7l2 2h7.500A1.500 1.500 0 0 1 18 4v10a1.500 1.500 0 0 1-1.500 1.500h-15A1.500 1.500 0 0 1 0 14z" fill="#e8e8e8"/></svg>
<span class="abs" style="left:217px;top:35px;letter-spacing:.32px">/home/human/kohtusaaga/</span>
<svg style="left:1146px;top:38px" width="20" height="20" viewBox="0 0 20 20" fill="none" stroke="#e8e8e8" stroke-width="2.200"><path d="M16.500 11a6.500 6.500 0 1 1-2.200-5.500"/><path d="M17.500 2v5.500H12z" fill="#e8e8e8" stroke="none"/></svg>
</div>
<div class="abs nw" style="left:0;top:94px;width:188px;height:649px;background:#2e2e2e;border-right:1px solid #252525;line-height:20px;letter-spacing:-.2px">
<span class="abs" style="left:10px;top:6px;font-weight:bold;font-size:14.800px;letter-spacing:-.1px">DEVICES</span>
<svg style="left:22px;top:34.3px" width="16" height="18" viewBox="0 0 16 18"><rect x=".5" y=".5" width="15" height="17" rx="1.500" fill="#585858"/><circle cx="8" cy="7" r="3.600" fill="none" stroke="#8e8e8e" stroke-width="1.600"/><path d="M3 15l3-4" stroke="#8e8e8e" stroke-width="1.400"/></svg>
<span class="abs" style="left:46px;top:33.3px">File System</span>
<svg style="left:22px;top:60.5px" width="16" height="18" viewBox="0 0 16 18"><rect x=".5" y=".5" width="15" height="17" rx="1.500" fill="#585858"/><circle cx="8" cy="7" r="3.600" fill="none" stroke="#8e8e8e" stroke-width="1.600"/><path d="M3 15l3-4" stroke="#8e8e8e" stroke-width="1.400"/></svg>
<span class="abs" style="left:46px;top:59.5px">fedora_localhost-l...</span>
<svg style="left:22px;top:86.5px" width="16" height="18" viewBox="0 0 16 18"><rect x=".5" y=".5" width="15" height="17" rx="1.500" fill="#585858"/><circle cx="8" cy="7" r="3.600" fill="none" stroke="#8e8e8e" stroke-width="1.600"/><path d="M3 15l3-4" stroke="#8e8e8e" stroke-width="1.400"/></svg>
<span class="abs" style="left:46px;top:85.5px">1,1 GB Volume</span>
<svg style="left:22px;top:112.5px" width="16" height="18" viewBox="0 0 16 18"><rect x=".5" y=".5" width="15" height="17" rx="1.500" fill="#585858"/><circle cx="8" cy="7" r="3.600" fill="none" stroke="#8e8e8e" stroke-width="1.600"/><path d="M3 15l3-4" stroke="#8e8e8e" stroke-width="1.400"/></svg>
<span class="abs" style="left:46px;top:111.5px">56 GB Volume</span>
<svg style="left:22px;top:138.5px" width="16" height="18" viewBox="0 0 16 18"><rect x=".5" y=".5" width="15" height="17" rx="1.500" fill="#585858"/><circle cx="8" cy="7" r="3.600" fill="none" stroke="#8e8e8e" stroke-width="1.600"/><path d="M3 15l3-4" stroke="#8e8e8e" stroke-width="1.400"/></svg>
<span class="abs" style="left:46px;top:137.5px">383 GB Volume</span>
<svg style="left:22px;top:164.5px" width="16" height="18" viewBox="0 0 16 18"><rect x=".5" y=".5" width="15" height="17" rx="1.500" fill="#585858"/><circle cx="8" cy="7" r="3.600" fill="none" stroke="#8e8e8e" stroke-width="1.600"/><path d="M3 15l3-4" stroke="#8e8e8e" stroke-width="1.400"/></svg><svg style="left:171px;top:167.5px" width="13" height="12" viewBox="0 0 13 12"><path d="M6.500 0L13 7H0zM0 9h13v3H0z" fill="#dcdcdc"/></svg>
<span class="abs" style="left:46px;top:163.5px">1,1 GB Volume</span>
<svg style="left:22px;top:190.5px" width="16" height="18" viewBox="0 0 16 18"><rect x=".5" y=".5" width="15" height="17" rx="1.500" fill="#585858"/><circle cx="8" cy="7" r="3.600" fill="none" stroke="#8e8e8e" stroke-width="1.600"/><path d="M3 15l3-4" stroke="#8e8e8e" stroke-width="1.400"/></svg><svg style="left:171px;top:193.5px" width="13" height="12" viewBox="0 0 13 12"><path d="M6.500 0L13 7H0zM0 9h13v3H0z" fill="#dcdcdc"/></svg>
<span class="abs" style="left:46px;top:189.5px">fedora_localho...</span>
<span class="abs" style="left:10px;top:215.5px;font-weight:bold;font-size:14.800px;letter-spacing:-.1px">PLACES</span>
<svg style="left:22px;top:246.5px" width="17" height="16" viewBox="0 0 22 22"><path d="M11 2L1 11.500h3V20h5v-6h4v6h5v-8.500h3L17.500 8V3.500h-3v1.800z" fill="#e4e4e4"/></svg>
<span class="abs" style="left:46px;top:244.5px">human</span>
<svg style="left:20px;top:271.5px" width="21" height="19" viewBox="0 0 21 19"><path d="M0 0h21v16h-5l1 3H4l1-3H0z" fill="#12bcd4"/></svg>
<span class="abs" style="left:46px;top:270.5px">Desktop</span>
<svg style="left:23px;top:297.5px" width="15" height="18" viewBox="0 0 15 18"><path d="M1.500 5h12v11.500a1.500 1.500 0 0 1-1.500 1.500H3a1.500 1.500 0 0 1-1.500-1.500zM0 1.500h4.500L5.500 0h4l1 1.500H15v2H0z" fill="#dcdcdc"/></svg>
<span class="abs" style="left:46px;top:296.5px">Trash</span>
<svg style="left:20px;top:324.1px" width="21" height="17" viewBox="0 0 21 17"><rect x="0" y="0" width="21" height="13" rx="1" fill="#3c3c3c"/><rect x="5" y="15" width="11" height="1.500" fill="#888"/></svg>
<span class="abs" style="left:46px;top:322.1px">Drives</span>
<span class="abs" style="left:10px;top:349.20000000000005px;font-weight:bold;font-size:14.800px;letter-spacing:-.1px">NETWORK</span>
<svg style="left:21px;top:378.5px" width="18" height="18" viewBox="0 0 18 18"><circle cx="9" cy="9" r="9" fill="#a044c8"/><path d="M4 6c2-1 3 0 4 1s0 3-2 3-1 3 0 4M11 3c0 2 3 2 3 4s-3 1-3 3 2 2 3 3" stroke="#f0e0f8" stroke-width="1.800" fill="none"/></svg>
<span class="abs" style="left:46px;top:377.5px">Browse Network</span>
</div>
<div class="abs nw" style="left:189px;top:715px;width:988px;height:29px;background:#353535;border-top:1px solid #262626;line-height:25px;letter-spacing:-.12px"><span class="abs" style="left:15px;top:0">88 items selected: 85,8 MB (85.756.509 bytes)</span></div>
<div class="abs" style="left:189px;top:94px;width:988px;height:621px;overflow:hidden">
<div class="tl" style="left:7.0px;top:-34.5px;width:114px;height:80px">muu_Ettepanek<br>parandusena:<br>Loomade<br>farm.eml</div>
<div class="tl" style="left:133.0px;top:-33.4px;width:110px;height:42px">muu_dets<br>1_2021.eml</div>
<div class="tl" style="left:381.0px;top:-33.4px;width:110px;height:42px">kuupäev<br>23_2021.eml</div>
<div class="tl" style="left:503.5px;top:-34.5px;width:113px;height:251px">kriminaalasjas<br>noma<br>1-20-1515<br><span style="letter-spacing:-.9px">MARGUS</span><br><span style="letter-spacing:-.9px">MEIGO</span><br>süüdistuses<br>KarS § 183 lg<br>1, KarS § 187<br>lg 1<br>järgi_Nov_4_20<br>21_teiseaegasa<br>ttumine_ajamu<br>utus .eml</div>
<div class="tl" style="left:627.0px;top:-15px;width:114px;height:80px">Pannijuotstud<br>Emailid_nov_29<br>_ylearupikk2. .e<br>ml</div>
<div class="tl" style="left:751.0px;top:-33.4px;width:114px;height:42px">asjas<br>mis saatsin.eml</div>
<svg style="left:48.6px;top:230.2px" width="33" height="40" viewBox="0 0 33 40"><path d="M0 1a1 1 0 0 1 1-1h19l13 13v26a1 1 0 0 1-1 1H1a1 1 0 0 1-1-1z" fill="#0b3b08"/><path d="M20 0l13 13H21a1 1 0 0 1-1-1z" fill="#1c5a50"/><rect x="6.500" y="18" width="20" height="16" rx="1.500" fill="#1c5fb4"/><path d="M7.500 19.500l9 6.500 9-6.500" fill="none" stroke="#0b3b08" stroke-width="2"/></svg>
<svg style="left:172.6px;top:230.2px" width="33" height="40" viewBox="0 0 33 40"><path d="M0 1a1 1 0 0 1 1-1h19l13 13v26a1 1 0 0 1-1 1H1a1 1 0 0 1-1-1z" fill="#0b3b08"/><path d="M20 0l13 13H21a1 1 0 0 1-1-1z" fill="#1c5a50"/><rect x="6.500" y="18" width="20" height="16" rx="1.500" fill="#1c5fb4"/><path d="M7.500 19.500l9 6.500 9-6.500" fill="none" stroke="#0b3b08" stroke-width="2"/></svg>
<svg style="left:296.6px;top:230.2px" width="33" height="40" viewBox="0 0 33 40"><path d="M0 1a1 1 0 0 1 1-1h19l13 13v26a1 1 0 0 1-1 1H1a1 1 0 0 1-1-1z" fill="#0b3b08"/><path d="M20 0l13 13H21a1 1 0 0 1-1-1z" fill="#1c5a50"/><rect x="6.500" y="18" width="20" height="16" rx="1.500" fill="#1c5fb4"/><path d="M7.500 19.500l9 6.500 9-6.500" fill="none" stroke="#0b3b08" stroke-width="2"/></svg>
<svg style="left:420.6px;top:230.2px" width="33" height="40" viewBox="0 0 33 40"><path d="M0 1a1 1 0 0 1 1-1h19l13 13v26a1 1 0 0 1-1 1H1a1 1 0 0 1-1-1z" fill="#0b3b08"/><path d="M20 0l13 13H21a1 1 0 0 1-1-1z" fill="#1c5a50"/><rect x="6.500" y="18" width="20" height="16" rx="1.500" fill="#1c5fb4"/><path d="M7.500 19.500l9 6.500 9-6.500" fill="none" stroke="#0b3b08" stroke-width="2"/></svg>
<svg style="left:544.6px;top:230.2px" width="33" height="40" viewBox="0 0 33 40"><path d="M0 1a1 1 0 0 1 1-1h19l13 13v26a1 1 0 0 1-1 1H1a1 1 0 0 1-1-1z" fill="#0b3b08"/><path d="M20 0l13 13H21a1 1 0 0 1-1-1z" fill="#1c5a50"/><rect x="6.500" y="18" width="20" height="16" rx="1.500" fill="#1c5fb4"/><path d="M7.500 19.500l9 6.500 9-6.500" fill="none" stroke="#0b3b08" stroke-width="2"/></svg>
<svg style="left:668.6px;top:230.2px" width="33" height="40" viewBox="0 0 33 40"><path d="M0 1a1 1 0 0 1 1-1h19l13 13v26a1 1 0 0 1-1 1H1a1 1 0 0 1-1-1z" fill="#0b3b08"/><path d="M20 0l13 13H21a1 1 0 0 1-1-1z" fill="#1c5a50"/><rect x="6.500" y="18" width="20" height="16" rx="1.500" fill="#1c5fb4"/><path d="M7.500 19.500l9 6.500 9-6.500" fill="none" stroke="#0b3b08" stroke-width="2"/></svg>
<svg style="left:792.6px;top:230.2px" width="33" height="40" viewBox="0 0 33 40"><path d="M0 1a1 1 0 0 1 1-1h19l13 13v26a1 1 0 0 1-1 1H1a1 1 0 0 1-1-1z" fill="#0b3b08"/><path d="M20 0l13 13H21a1 1 0 0 1-1-1z" fill="#1c5a50"/><rect x="6.500" y="18" width="20" height="16" rx="1.500" fill="#1c5fb4"/><path d="M7.500 19.500l9 6.500 9-6.500" fill="none" stroke="#0b3b08" stroke-width="2"/></svg>
<div class="tl" style="left:10.0px;top:274.7px;width:108px;height:80px">muu_Klaus<br>Schwab,<br>information<br>campaign .eml</div>
<div class="tl" style="left:142.0px;top:274.7px;width:92px;height:80px">muu_e-<br>Residensuse<br>töökoht<br>jpms.eml</div>
<div class="tl" style="left:255.5px;top:274.7px;width:113px;height:156px">muu_Facebook<br>Biggest ANTI<br><span style="letter-spacing:-1.35px">PSYCHEDELICS</span><br>Censor<br>exposed open,<br>100% clear<br>proof! Take a<br>look! 2.eml</div>
<div class="tl" style="left:379.1px;top:274.7px;width:113.7px;height:118px">muu_Kindlusm<br>õttes,<br>tagasiside,<br>(veidrad SMS<br>id)_23_dec_202<br>1.eml</div>
<div class="tl" style="left:503.0px;top:274.7px;width:114px;height:61px">muu_Nooruse<br>tänavad ja<br>tervislik elu.eml</div>
<div class="tl" style="left:626.2px;top:274.7px;width:115.5px;height:118px">muu_haavama<br>e2_hea näide<br>kuidas MITTE<br>teha asju,<br>seeeelmine link<br>mis saatsin.eml</div>
<div class="tl" style="left:751.2px;top:274.7px;width:113.5px;height:137px">Virtuaalistungi<br>kutse<br>kriminaalasjas<br>nr 1-20-1515<br>(portatiivne<br>seade)_oct_19_<br>2021.eml</div>
<svg style="left:48.6px;top:443.8px" width="33" height="40" viewBox="0 0 33 40"><path d="M0 1a1 1 0 0 1 1-1h19l13 13v26a1 1 0 0 1-1 1H1a1 1 0 0 1-1-1z" fill="#0b3b08"/><path d="M20 0l13 13H21a1 1 0 0 1-1-1z" fill="#1c5a50"/><rect x="6.500" y="18" width="20" height="16" rx="1.500" fill="#1c5fb4"/><path d="M7.500 19.500l9 6.500 9-6.500" fill="none" stroke="#0b3b08" stroke-width="2"/></svg>
<svg style="left:172.6px;top:443.8px" width="33" height="40" viewBox="0 0 33 40"><path d="M0 1a1 1 0 0 1 1-1h19l13 13v26a1 1 0 0 1-1 1H1a1 1 0 0 1-1-1z" fill="#0b3b08"/><path d="M20 0l13 13H21a1 1 0 0 1-1-1z" fill="#1c5a50"/><rect x="6.500" y="18" width="20" height="16" rx="1.500" fill="#1c5fb4"/><path d="M7.500 19.500l9 6.500 9-6.500" fill="none" stroke="#0b3b08" stroke-width="2"/></svg>
<svg style="left:296.6px;top:443.8px" width="33" height="40" viewBox="0 0 33 40"><path d="M0 1a1 1 0 0 1 1-1h19l13 13v26a1 1 0 0 1-1 1H1a1 1 0 0 1-1-1z" fill="#0b3b08"/><path d="M20 0l13 13H21a1 1 0 0 1-1-1z" fill="#1c5a50"/><rect x="6.500" y="18" width="20" height="16" rx="1.500" fill="#1c5fb4"/><path d="M7.500 19.500l9 6.500 9-6.500" fill="none" stroke="#0b3b08" stroke-width="2"/></svg>
<svg style="left:414px;top:440px" width="43" height="47" viewBox="0 0 43 47"><path d="M7 0h23l11 11v36H7z" fill="#1c5fb4"/><path d="M30 0l11 11H30z" fill="#184f9a"/><rect x="1" y="13" width="30" height="20" rx="2" fill="#1c5fb4" stroke="#0d2d63" stroke-width="2.200"/><text x="16" y="30" font-family="Liberation Sans,sans-serif" font-weight="bold" font-size="18" text-anchor="middle" fill="#0d2d63">iD</text><text x="24" y="43" font-family="Liberation Sans,sans-serif" font-weight="bold" font-size="6" text-anchor="middle" fill="#0d2d63">DIGIDOC</text></svg>
<div class="tl" style="left:6.0px;top:488.5px;width:116px;height:80px">muu_toterhuum<br>or_Ravist<br>Matemaatikani.<br>.eml</div>
<div class="tl" style="left:136.0px;top:488.5px;width:104px;height:61px">muu_Olge<br>tublid ja jääge<br>kokku!.eml</div>
<div class="tl" style="left:256.2px;top:488.5px;width:111.5px;height:118px">muu_Peaasi, et<br>mäletame (2<br>teemat, ja<br>Ettepanek).<br>Teeme Reformi<br>ka v = .eml</div>
<div class="tl" style="left:379.1px;top:488.5px;width:113.7px;height:61px">muu_Mälestust<br>egevused_korra<br>ga.asice</div>
</div>
<div class="abs" style="left:0;top:25px;width:2px;height:744px;background:#232d35"></div><div class="abs" style="left:1175px;top:25px;width:2px;height:744px;background:#232d35"></div>
</div>

<div class="task">
<div class="abs" style="left:2px;top:4px;width:24px;height:23px;border-radius:2px;background:#1c1c1c"></div><svg style="left:9px;top:5px" width="11" height="22" viewBox="0 0 11 22"><path d="M6.500 0c2.500 1.500 3.800 4 3.500 7 .3 2.500-.2 5-1.500 7.500C8 16.500 7 18 5.800 19l1.200 3-1.800-2.200C3.500 19.500 2 18 1.800 16l.7-1-1-1.500C1 11.500 1.500 9.500 2.200 8L1.500 6.500 3 5.500C3.500 3.200 4.800 1.300 6.500 0z" fill="#f6dc8c"/></svg><span class="abs" style="left:28px;top:1px;line-height:29px;font-size:16.600px;letter-spacing:-.3px">Menu</span><svg style="left:75px;top:7px" width="20" height="19" viewBox="0 0 20 19"><path d="M0 0h20v15h-4.500l.5 3.500H4l.5-3.500H0z" fill="#12bcd4"/><rect x="0" y="0" width="20" height="1.200" fill="#0c6c7a"/><rect x="5" y="16.500" width="10" height="2" fill="#0b5561"/></svg><svg style="left:104px;top:5px" width="22" height="22" viewBox="0 0 20 20"><circle cx="10" cy="11" r="8.300" fill="#ff8a16"/><path d="M11.500 .8c1.800 1.400 2.700 3 3 4.700 2.200 1.300 3.700 3.500 3.700 6.200a8.200 8.200 0 0 1-16.400 0c0-2 .7-3.800 1.900-5.100-.2 1.300 0 2.300.6 3 .1-2.700 1.700-4 2-5.800.9.400 1.600 1 2 1.900 1.500-1.100 2.800-2.700 3.200-4.900z" fill="#ff9f1c"/><path d="M11.500 .8c1.800 1.400 2.700 3 3 4.700 1.600 1 2.800 2.400 3.400 4.100-.4-2.600-2-4.300-3.600-5.100C14 2.800 13 1.600 11.500.8z" fill="#ffe14a"/><path d="M14.500 5.500c1.300 1.300 1.900 3 1.700 4.800-.3-1.200-1-2.200-1.900-2.800z" fill="#ffd43b"/><circle cx="9.300" cy="10.800" r="4.100" fill="#8a4fe0"/><path d="M5 8.300c1.200-.3 2.500 0 3.300.8 1-.2 2 .3 2.500 1-1.300-.1-2 .6-2 1.500 0 1.100 1 2 2.600 1.800-1 1.300-3 1.700-4.600.9C5.300 13.500 4.600 11.800 5 8.300z" fill="#ff7a18"/><path d="M1.900 12.500c.8 3.900 4 6.700 8.100 6.700s7.300-2.800 8.100-6.700c-1.300 3-4.300 5-8.100 5s-6.800-2-8.100-5z" fill="#f43f5e"/></svg><svg style="left:135px;top:6px" width="20" height="21" viewBox="0 0 20 21"><path d="M3.500 0h13v2h-13z" fill="#4a8fe0"/><path d="M2.500 1.500h15v2h-15z" fill="#56b55a"/><path d="M1.500 3.500h17v2h-17z" fill="#e8c24a"/><path d="M0 6h20v15H0z" fill="#8e8e8e"/><rect x="7" y="12" width="6" height="2" fill="#f0f0f0"/></svg><svg style="left:165px;top:7px" width="20" height="18" viewBox="0 0 20 18"><rect width="20" height="18" rx="1.500" fill="#444"/><path d="M2.500 3.500l4.500 2.500-4.500 2.500" fill="none" stroke="#f4f4f4" stroke-width="1.600"/><rect x="8" y="8.500" width="6" height="1.600" fill="#f4f4f4"/></svg><div class="abs" style="left:192px;top:10px;width:4px;height:1px;background:#8a8a8a;box-shadow:0 4px 0 #8a8a8a,0 8px 0 #8a8a8a"></div>
<div class="btn" style="left:199.0px;width:65px"><svg class="ic" viewBox="0 0 20 20"><circle cx="10" cy="11" r="8.300" fill="#ff8a16"/><path d="M11.500 .8c1.800 1.400 2.700 3 3 4.700 2.200 1.300 3.700 3.500 3.700 6.200a8.200 8.200 0 0 1-16.400 0c0-2 .7-3.800 1.900-5.100-.2 1.300 0 2.300.6 3 .1-2.700 1.700-4 2-5.800.9.400 1.600 1 2 1.900 1.500-1.100 2.800-2.700 3.200-4.900z" fill="#ff9f1c"/><path d="M11.500 .8c1.800 1.400 2.700 3 3 4.700 1.600 1 2.800 2.400 3.400 4.100-.4-2.600-2-4.300-3.600-5.100C14 2.800 13 1.600 11.500.8z" fill="#ffe14a"/><path d="M14.500 5.500c1.300 1.300 1.900 3 1.700 4.800-.3-1.200-1-2.200-1.900-2.800z" fill="#ffd43b"/><circle cx="9.300" cy="10.800" r="4.100" fill="#8a4fe0"/><path d="M5 8.300c1.200-.3 2.500 0 3.300.8 1-.2 2 .3 2.500 1-1.300-.1-2 .6-2 1.500 0 1.100 1 2 2.600 1.800-1 1.300-3 1.700-4.600.9C5.300 13.500 4.600 11.800 5 8.300z" fill="#ff7a18"/><path d="M1.900 12.500c.8 3.900 4 6.700 8.100 6.700s7.300-2.800 8.100-6.700c-1.300 3-4.300 5-8.100 5s-6.800-2-8.100-5z" fill="#f43f5e"/></svg><span>Ag...</span></div>
<div class="btn" style="left:264.9px;width:65px"><svg class="ic" viewBox="0 0 20 20"><rect x="2" y=".5" width="16" height="19" rx="2.500" fill="#6b6b6b"/><rect x="2" y=".5" width="3.500" height="19" rx="1.500" fill="#4a4a4a"/><rect x="4.500" y="6" width="12" height="6" fill="#4db04e"/><rect x="7" y="8.300" width="7" height="1.200" fill="#c9efc9"/></svg><span>ne...</span></div>
<div class="btn" style="left:330.8px;width:65px"><svg class="ic" viewBox="0 0 20 20"><circle cx="10" cy="10" r="9.500" fill="#2f67ba"/><circle cx="10" cy="10" r="8.300" fill="none" stroke="#6fa0e6" stroke-width=".8"/><text x="10" y="13.300" font-family="Liberation Sans,sans-serif" font-size="10" font-weight="bold" text-anchor="middle" fill="#fff">qb</text></svg><span>qBi...</span></div>
<div class="btn dim" style="left:396.7px;width:65px"><svg class="ic" viewBox="0 0 20 20"><path d="M8.300 1h3.400l4.300 13H4z" fill="#f48b00"/><path d="M7 5.500h6l1 3H6zM5.200 11h9.600l.7 2.200h-11z" fill="#fff"/><path d="M2 14.500h16l1.500 4.500H.5z" fill="#f48b00"/></svg><span>[VL...</span></div>
<div class="btn dim" style="left:462.6px;width:65px"><svg class="ic" viewBox="0 0 20 20"><rect x="1" y="2.500" width="18" height="12" rx="1" fill="#a43a3a"/><rect x="5.500" y="6" width="6.500" height="5" rx=".8" fill="#d98d8d"/><path d="M12 8.500l3-2v4z" fill="#d98d8d"/><rect x="5" y="16" width="10" height="2" fill="#6a6a6a"/></svg><span>[Si...</span></div>
<div class="btn dim" style="left:528.5px;width:65px"><svg class="ic" opacity=".6" viewBox="0 0 20 20"><rect x=".5" y=".5" width="19" height="19" rx="1.500" fill="#fff"/><text x="10" y="12.500" font-family="Liberation Sans,sans-serif" font-size="11.500" font-weight="bold" text-anchor="middle" fill="#003f8c">iD</text><rect x="3.500" y="15" width="13" height="2" fill="#003f8c"/><rect x="3.300" y="3.500" width="2" height="2" fill="#e8602c"/></svg><span>[m...</span></div>
<div class="btn dim" style="left:594.4px;width:65px"><svg class="ic" viewBox="0 0 20 20"><path d="M1 3.500h7l1.500 2H19V17H1z" fill="#1d7d8c"/><path d="M1 7h18v10H1z" fill="#218a9a"/></svg><span>[Ke...</span></div>
<div class="btn" style="left:660.3px;width:65px"><svg class="ic" viewBox="0 0 20 20"><path d="M0 2h20v14h-4.500l1 2.500h-13l1-2.500H0z" fill="#12bcd4"/></svg><span>De...</span></div>
<div class="btn dim" style="left:726.2px;width:65px"><svg class="ic" viewBox="0 0 20 20"><path d="M1 3.500h7l1.500 2H19V17H1z" fill="#1d7d8c"/><path d="M1 7h18v10H1z" fill="#218a9a"/></svg><span>[ko...</span></div>
<div class="btn on" style="left:792.1px;width:65px"><svg class="ic" viewBox="0 0 20 20"><path d="M1 3h7l1.500 2H19v12H1z" fill="#0ea5c4"/><path d="M1 6.500h18V17H1z" fill="#18c3e0"/></svg><span>ko...</span></div>
<div class="btn dim" style="left:858.0px;width:65px"><svg class="ic" viewBox="0 0 20 20" opacity=".55"><rect x="0" y="2" width="20" height="16" rx="1.500" fill="#454545"/><path d="M3.500 6.500l4 2.500-4 2.500" fill="none" stroke="#f0f0f0" stroke-width="1.700"/><rect x="8.500" y="11" width="6" height="1.700" fill="#f0f0f0"/></svg><span>[Li...</span></div>
<div class="btn" style="left:923.9px;width:65px"><svg class="ic" viewBox="0 0 20 20"><rect x="0" y="2" width="20" height="16" rx="1.500" fill="#454545"/><path d="M3.500 6.500l4 2.500-4 2.500" fill="none" stroke="#f0f0f0" stroke-width="1.700"/><rect x="8.500" y="11" width="6" height="1.700" fill="#f0f0f0"/></svg><span>Lin...</span></div>
<div class="btn" style="left:989.8px;width:65px"><svg class="ic" viewBox="0 0 20 20"><rect x="0" y="2" width="20" height="16" rx="1.500" fill="#454545"/><path d="M3.500 6.500l4 2.500-4 2.500" fill="none" stroke="#f0f0f0" stroke-width="1.700"/><rect x="8.500" y="11" width="6" height="1.700" fill="#f0f0f0"/></svg><span>Lin...</span></div>
<div class="btn dim" style="left:1055.7px;width:65px"><svg class="ic" viewBox="0 0 20 20" opacity=".55"><rect x="0" y="2" width="20" height="16" rx="1.500" fill="#454545"/><path d="M3.500 6.500l4 2.500-4 2.500" fill="none" stroke="#f0f0f0" stroke-width="1.700"/><rect x="8.500" y="11" width="6" height="1.700" fill="#f0f0f0"/></svg><span>[Li...</span></div>
<div class="btn dim" style="left:1121.6px;width:65px"><svg class="ic" viewBox="0 0 20 20"><circle cx="10" cy="10" r="9.500" fill="#1f7a68"/><circle cx="10" cy="10" r="5.200" fill="none" stroke="#9fd6c8" stroke-width="2.600" stroke-dasharray="3.200 1.300"/></svg><span>[Sc...</span></div>
<div class="btn dim" style="left:1187.5px;width:65px"><svg class="ic" viewBox="0 0 20 20"><circle cx="10" cy="10" r="9.500" fill="#1f7a68"/><circle cx="10" cy="10" r="5.200" fill="none" stroke="#9fd6c8" stroke-width="2.600" stroke-dasharray="3.200 1.300"/></svg><span>[Sc...</span></div>
<div class="abs" style="left:1261px;top:2px;width:52px;height:28px;background:#222;border:1px solid #e8e8e8"></div><div class="abs" style="left:1274px;top:5px;width:39px;height:25px;background:#676767;border:1px solid #d8d8d8;border-bottom:0"></div><svg style="left:1287px;top:11px" width="14" height="12" viewBox="0 0 17 15"><path d="M0 0h6.500l1.500 2H17v13H0z" fill="#18c3e0"/></svg><div class="abs" style="left:1368px;top:2px;width:120px;height:28px;border:1px solid #222;background:#2c2c2c"></div><span class="abs" style="left:1372px;top:2px;line-height:25px;font-size:18.500px;letter-spacing:-.8px;color:#f2f2f2;-webkit-text-stroke:.3px #f2f2f2">qb</span><svg style="left:1397px;top:6px" width="20" height="22" viewBox="0 0 20 22"><rect x="0" y="3" width="14" height="12" rx="1.500" fill="#e4e4e4"/><path d="M14 8l5-3.500v9L14 10z" fill="#e4e4e4"/><circle cx="7" cy="9" r="3.800" fill="#14a4c8"/><path d="M3 20.500h15v-3z" fill="#f08a1c"/></svg><svg style="left:1420px;top:4px" width="20" height="22" viewBox="0 0 20 22"><path d="M8.300 1h3.400l4.300 14H4z" fill="#f48b00"/><path d="M7 6h6l1 3.300H6zM5.200 12h9.600l.7 2.400h-11z" fill="#fff"/><path d="M2 15.500h16l2 6H0z" fill="#f48b00"/></svg><svg style="left:1444px;top:5px" width="21" height="21" viewBox="0 0 21 21" fill="none"><circle cx="10.500" cy="10.500" r="8" stroke="#f0a823" stroke-width="3"/><path d="M7.500 6.500h5.500v3.500H8v4.500h6" stroke="#e88a1a" stroke-width="2"/><path d="M16 3l3 1-1 3M5 18l-3-1 1-3" stroke="#f6c945" stroke-width="1.600"/></svg><svg style="left:1471px;top:9px" width="15" height="14" viewBox="0 0 15 14" fill="none" stroke="#ececec" stroke-width="1.600"><rect x=".8" y=".8" width="13.400" height="10"/><path d="M4 13h7" stroke-width="2"/></svg><svg style="left:1496px;top:6px" width="18" height="20" viewBox="0 0 18 20"><path d="M1 7h3.500L9 2.500v15L4.500 13H1z" fill="#f2f2f2"/><path d="M11.500 6.500a5 5 0 0 1 0 7M13.500 3.500a9 9 0 0 1 0 13" fill="none" stroke="#f2f2f2" stroke-width="1.700"/></svg><span class="abs" style="left:1524px;top:1px;line-height:30px;font-size:13.200px;letter-spacing:-.3px;color:#e4e4e4">4:29:13</span><svg style="left:1573px;top:4px" width="24" height="24" viewBox="0 0 26 26"><defs><radialGradient id="gl29" cx=".38" cy=".32" r=".75"><stop offset="0" stop-color="#cfe6fb"/><stop offset=".45" stop-color="#4a95e0"/><stop offset="1" stop-color="#1b4e9e"/></radialGradient></defs><circle cx="13" cy="13" r="12.500" fill="url(#gl29)"/><path d="M5 9c3-2 6-1 8 1s5 1 7-1c1 3-1 6-4 7s-4 4-7 3-5-6-4-10z" fill="#e8f2fc" opacity=".75"/></svg>
</div>

   <svg style="left:1175px;top:689px" width="14" height="21" viewBox="0 0 14 21"><path d="M1.500 1.500 L1.500 17 L5.200 13.600 L7.800 19.600 L10.300 18.500 L7.700 12.700 L12.600 12.700 Z" fill="#111" stroke="#fff" stroke-width="1.200" stroke-linejoin="round"/></svg>
  </div>
 </div>
 <!-- toolbar -->
 <div class="abs nw" style="left:1px;top:751px;width:1025px;height:44px;background:#353535;color:#ececec;font-size:16px;line-height:20px;letter-spacing:-.1px">
  <svg style="left:13px;top:12px" width="18" height="18" viewBox="0 0 18 18" fill="none" stroke="#ececec" stroke-width="2"><path d="M14.800 10.500a6 6 0 1 1-2.300-5.300"/><path d="M9.500 1l4 3.500-4 3.500z" fill="#ececec" stroke="none"/></svg>
<span class="abs" style="left:42px;top:11px">Rotate</span>
<svg style="left:113px;top:12px" width="20" height="19" viewBox="0 0 20 19" fill="none" stroke="#ececec" stroke-width="2"><path d="M0 4.500h12.500V17M4.500 0v12.500H17"/><rect x="17.500" y="15.500" width="2" height="2" fill="#ececec" stroke="none"/></svg>
<span class="abs" style="left:143px;top:11px">Crop</span>
<svg style="left:204px;top:16px" width="16" height="10" viewBox="0 0 16 10"><path d="M0 0h16v10H0zM2 6v2.500h1.500V6zM5 4.500V8.500h1.500V4.500zM8 6v2.500h1.500V6zM11 4.500V8.500h1.500V4.500z" fill="#ececec" fill-rule="evenodd"/></svg>
<span class="abs" style="left:231px;top:11px">Straighten</span>
<svg style="left:329px;top:14px" width="18" height="14" viewBox="0 0 18 14" fill="none" stroke="#ececec" stroke-width="1.800"><path d="M1 7c2-4 5-6 8-6s6 2 8 6c-2 4-5 6-8 6s-6-2-8-6z"/><circle cx="9" cy="7" r="2.600"/></svg>
<span class="abs" style="left:358px;top:11px">Red-eye</span>
<svg style="left:438px;top:13px" width="17" height="17" viewBox="0 0 19 19"><circle cx="9.500" cy="5.500" r="4.300" fill="none" stroke="#ececec" stroke-width="1.700"/><circle cx="5.500" cy="12.500" r="4.300" fill="none" stroke="#ececec" stroke-width="1.700"/><circle cx="13.500" cy="13" r="5" fill="#ececec"/></svg>
<span class="abs" style="left:467px;top:11px">Adjust</span>
<svg style="left:538px;top:13px" width="17" height="17" viewBox="0 0 17 17"><path d="M1 14l9-9 2.500 2.500-9 9z" fill="#ececec"/><path d="M11.500 3.500l2-2 2.500 2.500-2 2zM14 0l.6 1.400L16 2l-1.400.6L14 4l-.6-1.400L12 2l1.400-.6z" fill="#ececec"/></svg>
<span class="abs" style="left:567px;top:11px">Enhance</span>
<svg style="left:769px;top:14px" width="15" height="15" viewBox="0 0 15 15"><rect x=".8" y=".8" width="13.400" height="13.400" fill="none" stroke="#ececec" stroke-width="1.600"/><circle cx="7.500" cy="6.800" r="1.600" fill="#ececec"/><path d="M4.500 12c0-2 1.200-3 3-3s3 1 3 3z" fill="#ececec"/></svg>
<div class="abs" style="left:800px;top:20px;width:93px;height:3px;background:#262626;border-radius:1px"></div>
<div class="abs" style="left:788.500px;top:11.500px;width:19px;height:19px;border-radius:50%;background:#2f2f2f;border:1px solid #191919"></div>
<svg style="left:903px;top:12px" width="19" height="19" viewBox="0 0 19 19"><rect x="1" y="1" width="17" height="17" fill="none" stroke="#ececec" stroke-width="2"/><circle cx="9.500" cy="7.500" r="2.700" fill="#ececec"/><path d="M4 16c0-3.500 2.200-5 5.500-5s5.500 1.500 5.500 5z" fill="#ececec"/></svg>
<svg style="left:949px;top:13px" width="16" height="16" viewBox="0 0 16 16" fill="none" stroke="#ececec" stroke-width="2"><path d="M15 8H2.500M8 2L2 8l6 6"/></svg>
<svg style="left:991px;top:13px" width="16" height="16" viewBox="0 0 16 16" fill="none" stroke="#ececec" stroke-width="2"><path d="M1 8h12.500M8 2l6 6-6 6"/></svg>

 </div>
 <div class="abs" style="left:0;top:25px;width:2px;height:770px;background:#232d35"></div><div class="abs" style="left:1026px;top:25px;width:2px;height:770px;background:#232d35"></div><div class="abs" style="left:0;top:793px;width:1028px;height:2px;background:#232d35"></div>
</div>


<!-- ===== taskbar ===== -->
<div class="task">
<div class="abs" style="left:2px;top:4px;width:24px;height:23px;border-radius:2px;background:#1c1c1c"></div><svg style="left:9px;top:5px" width="11" height="22" viewBox="0 0 11 22"><path d="M6.500 0c2.500 1.500 3.800 4 3.500 7 .3 2.500-.2 5-1.500 7.500C8 16.500 7 18 5.800 19l1.200 3-1.800-2.200C3.500 19.500 2 18 1.800 16l.7-1-1-1.500C1 11.500 1.500 9.500 2.200 8L1.500 6.500 3 5.500C3.500 3.200 4.800 1.300 6.500 0z" fill="#f6dc8c"/></svg><span class="abs" style="left:28px;top:1px;line-height:29px;font-size:16.600px;letter-spacing:-.3px">Menu</span><svg style="left:75px;top:7px" width="20" height="19" viewBox="0 0 20 19"><path d="M0 0h20v15h-4.500l.5 3.500H4l.5-3.500H0z" fill="#12bcd4"/><rect x="0" y="0" width="20" height="1.200" fill="#0c6c7a"/><rect x="5" y="16.500" width="10" height="2" fill="#0b5561"/></svg><svg style="left:104px;top:5px" width="22" height="22" viewBox="0 0 20 20"><circle cx="10" cy="11" r="8.300" fill="#ff8a16"/><path d="M11.500 .8c1.800 1.400 2.700 3 3 4.700 2.200 1.300 3.700 3.500 3.700 6.200a8.200 8.200 0 0 1-16.400 0c0-2 .7-3.800 1.900-5.100-.2 1.300 0 2.300.6 3 .1-2.700 1.700-4 2-5.800.9.400 1.600 1 2 1.900 1.500-1.100 2.800-2.700 3.200-4.900z" fill="#ff9f1c"/><path d="M11.500 .8c1.800 1.400 2.700 3 3 4.700 1.600 1 2.800 2.400 3.400 4.100-.4-2.600-2-4.300-3.600-5.100C14 2.800 13 1.600 11.500.8z" fill="#ffe14a"/><path d="M14.500 5.500c1.300 1.300 1.900 3 1.700 4.800-.3-1.200-1-2.200-1.900-2.800z" fill="#ffd43b"/><circle cx="9.300" cy="10.800" r="4.100" fill="#8a4fe0"/><path d="M5 8.300c1.200-.3 2.500 0 3.300.8 1-.2 2 .3 2.500 1-1.300-.1-2 .6-2 1.500 0 1.100 1 2 2.600 1.800-1 1.300-3 1.700-4.600.9C5.300 13.500 4.600 11.800 5 8.300z" fill="#ff7a18"/><path d="M1.900 12.500c.8 3.900 4 6.700 8.100 6.700s7.300-2.800 8.100-6.700c-1.300 3-4.300 5-8.100 5s-6.800-2-8.100-5z" fill="#f43f5e"/></svg><svg style="left:135px;top:6px" width="20" height="21" viewBox="0 0 20 21"><path d="M3.500 0h13v2h-13z" fill="#4a8fe0"/><path d="M2.500 1.500h15v2h-15z" fill="#56b55a"/><path d="M1.500 3.500h17v2h-17z" fill="#e8c24a"/><path d="M0 6h20v15H0z" fill="#8e8e8e"/><rect x="7" y="12" width="6" height="2" fill="#f0f0f0"/></svg><svg style="left:165px;top:7px" width="20" height="18" viewBox="0 0 20 18"><rect width="20" height="18" rx="1.500" fill="#444"/><path d="M2.500 3.500l4.500 2.500-4.500 2.500" fill="none" stroke="#f4f4f4" stroke-width="1.600"/><rect x="8" y="8.500" width="6" height="1.600" fill="#f4f4f4"/></svg><div class="abs" style="left:192px;top:10px;width:4px;height:1px;background:#8a8a8a;box-shadow:0 4px 0 #8a8a8a,0 8px 0 #8a8a8a"></div>
<div class="btn" style="left:199px;width:61px"><svg class="ic" viewBox="0 0 20 20"><circle cx="10" cy="11" r="8.300" fill="#ff8a16"/><path d="M11.500 .8c1.800 1.400 2.700 3 3 4.700 2.200 1.300 3.700 3.500 3.700 6.200a8.200 8.200 0 0 1-16.400 0c0-2 .7-3.800 1.900-5.100-.2 1.300 0 2.300.6 3 .1-2.700 1.700-4 2-5.800.9.400 1.600 1 2 1.900 1.500-1.100 2.800-2.700 3.200-4.900z" fill="#ff9f1c"/><path d="M11.500 .8c1.800 1.400 2.700 3 3 4.700 1.600 1 2.800 2.400 3.400 4.100-.4-2.600-2-4.300-3.600-5.100C14 2.800 13 1.600 11.500.8z" fill="#ffe14a"/><path d="M14.500 5.500c1.300 1.300 1.900 3 1.700 4.800-.3-1.200-1-2.200-1.900-2.800z" fill="#ffd43b"/><circle cx="9.300" cy="10.800" r="4.100" fill="#8a4fe0"/><path d="M5 8.300c1.200-.3 2.500 0 3.300.8 1-.2 2 .3 2.500 1-1.300-.1-2 .6-2 1.500 0 1.100 1 2 2.600 1.800-1 1.300-3 1.700-4.600.9C5.300 13.500 4.600 11.800 5 8.300z" fill="#ff7a18"/><path d="M1.900 12.500c.8 3.900 4 6.700 8.100 6.700s7.300-2.800 8.100-6.700c-1.300 3-4.300 5-8.100 5s-6.800-2-8.100-5z" fill="#f43f5e"/></svg><span>Ag...</span></div>
<div class="btn" style="left:261px;width:61px"><svg class="ic" viewBox="0 0 20 20"><rect x="2" y=".5" width="16" height="19" rx="2.500" fill="#6b6b6b"/><rect x="2" y=".5" width="3.500" height="19" rx="1.500" fill="#4a4a4a"/><rect x="4.500" y="6" width="12" height="6" fill="#4db04e"/><rect x="7" y="8.300" width="7" height="1.200" fill="#c9efc9"/></svg><span>ne...</span></div>
<div class="btn" style="left:323px;width:61px"><svg class="ic" viewBox="0 0 20 20"><circle cx="10" cy="10" r="9.500" fill="#2f67ba"/><circle cx="10" cy="10" r="8.300" fill="none" stroke="#6fa0e6" stroke-width=".8"/><text x="10" y="13.300" font-family="Liberation Sans,sans-serif" font-size="10" font-weight="bold" text-anchor="middle" fill="#fff">qb</text></svg><span>qB...</span></div>
<div class="btn dim" style="left:385px;width:61px"><svg class="ic" viewBox="0 0 20 20"><path d="M8.300 1h3.400l4.300 13H4z" fill="#f48b00"/><path d="M7 5.500h6l1 3H6zM5.200 11h9.600l.7 2.200h-11z" fill="#fff"/><path d="M2 14.500h16l1.500 4.500H.5z" fill="#f48b00"/></svg><span>[V...</span></div>
<div class="btn dim" style="left:447px;width:61px"><svg class="ic" viewBox="0 0 20 20"><rect x="1" y="2.500" width="18" height="12" rx="1" fill="#a43a3a"/><rect x="5.500" y="6" width="6.500" height="5" rx=".8" fill="#d98d8d"/><path d="M12 8.500l3-2v4z" fill="#d98d8d"/><rect x="5" y="16" width="10" height="2" fill="#6a6a6a"/></svg><span>[Si...</span></div>
<div class="btn" style="left:509px;width:61px"><svg class="ic" viewBox="0 0 20 20"><rect x=".5" y=".5" width="19" height="19" rx="1.500" fill="#fff"/><text x="10" y="12.500" font-family="Liberation Sans,sans-serif" font-size="11.500" font-weight="bold" text-anchor="middle" fill="#003f8c">iD</text><rect x="3.500" y="15" width="13" height="2" fill="#003f8c"/><rect x="3.300" y="3.500" width="2" height="2" fill="#e8602c"/></svg><span>m...</span></div>
<div class="btn on" style="left:571px;width:61px"><svg class="ic" viewBox="0 0 20 20"><circle cx="10" cy="10" r="9.500" fill="#4a9fd6"/><path d="M4.500 7h2.500l1-1.500h4L13 7h2.500v7.500h-11z" fill="#fff"/><circle cx="10" cy="10.500" r="2.600" fill="#4a9fd6"/><circle cx="10" cy="10.500" r="1.300" fill="#fff"/></svg><span>Sc...</span></div>
<div class="btn dim" style="left:633px;width:61px"><svg class="ic" viewBox="0 0 20 20"><path d="M1 3.500h7l1.500 2H19V17H1z" fill="#1d7d8c"/><path d="M1 7h18v10H1z" fill="#218a9a"/></svg><span>[K...</span></div>
<div class="btn" style="left:695px;width:61px"><svg class="ic" viewBox="0 0 20 20"><path d="M0 2h20v14h-4.500l1 2.500h-13l1-2.500H0z" fill="#12bcd4"/></svg><span>De...</span></div>
<div class="btn dim" style="left:757px;width:61px"><svg class="ic" viewBox="0 0 20 20"><path d="M1 3.500h7l1.500 2H19V17H1z" fill="#1d7d8c"/><path d="M1 7h18v10H1z" fill="#218a9a"/></svg><span>[ko...</span></div>
<div class="btn" style="left:819px;width:61px"><svg class="ic" viewBox="0 0 20 20"><path d="M1 3h7l1.500 2H19v12H1z" fill="#0ea5c4"/><path d="M1 6.500h18V17H1z" fill="#18bfdc"/><rect x="6" y="9" width="8" height="5.500" fill="#0b6f85"/><path d="M7 13.500l2-2.500 1.500 1.500 1-1 1.500 2z" fill="#9fe6f3"/></svg><span>Pi...</span></div>
<div class="btn dim" style="left:881px;width:61px"><svg class="ic" viewBox="0 0 20 20" opacity=".55"><rect x="0" y="2" width="20" height="16" rx="1.500" fill="#454545"/><path d="M3.500 6.500l4 2.500-4 2.500" fill="none" stroke="#f0f0f0" stroke-width="1.700"/><rect x="8.500" y="11" width="6" height="1.700" fill="#f0f0f0"/></svg><span>[Li...</span></div>
<div class="btn" style="left:943px;width:61px"><svg class="ic" viewBox="0 0 20 20"><rect x="0" y="2" width="20" height="16" rx="1.500" fill="#454545"/><path d="M3.500 6.500l4 2.500-4 2.500" fill="none" stroke="#f0f0f0" stroke-width="1.700"/><rect x="8.500" y="11" width="6" height="1.700" fill="#f0f0f0"/></svg><span>Li...</span></div>
<div class="btn" style="left:1005px;width:61px"><svg class="ic" viewBox="0 0 20 20"><rect x="0" y="2" width="20" height="16" rx="1.500" fill="#454545"/><path d="M3.500 6.500l4 2.500-4 2.500" fill="none" stroke="#f0f0f0" stroke-width="1.700"/><rect x="8.500" y="11" width="6" height="1.700" fill="#f0f0f0"/></svg><span>Li...</span></div>
<div class="btn dim" style="left:1067px;width:61px"><svg class="ic" viewBox="0 0 20 20" opacity=".55"><rect x="0" y="2" width="20" height="16" rx="1.500" fill="#454545"/><path d="M3.500 6.500l4 2.500-4 2.500" fill="none" stroke="#f0f0f0" stroke-width="1.700"/><rect x="8.500" y="11" width="6" height="1.700" fill="#f0f0f0"/></svg><span>[Li...</span></div>
<div class="btn dim" style="left:1129px;width:61px"><svg class="ic" viewBox="0 0 20 20"><circle cx="10" cy="10" r="9.500" fill="#1f7a68"/><circle cx="10" cy="10" r="5.200" fill="none" stroke="#9fd6c8" stroke-width="2.600" stroke-dasharray="3.200 1.300"/></svg><span>[Sc...</span></div>
<div class="btn dim" style="left:1191px;width:61px"><svg class="ic" viewBox="0 0 20 20"><circle cx="10" cy="10" r="9.500" fill="#1f7a68"/><circle cx="10" cy="10" r="5.200" fill="none" stroke="#9fd6c8" stroke-width="2.600" stroke-dasharray="3.200 1.300"/></svg><span>[Sc...</span></div>
<div class="abs" style="left:1261px;top:2px;width:52px;height:28px;background:#222;border:1px solid #e8e8e8"></div><div class="abs" style="left:1281px;top:3px;width:31px;height:26px;background:#6a6a6a"></div><div class="abs" style="left:1274px;top:6px;width:8px;height:21px;border:1px solid #e8e8e8;border-right:0;background:#222"></div><svg style="left:1264px;top:8px" width="10" height="16" viewBox="0 0 10 16"><rect x="0" y="1" width="10" height="13" fill="#1aa7c4"/><rect x="2" y="4" width="8" height="7" fill="#0c6c80"/></svg><svg style="left:1288px;top:6px" width="19" height="19" viewBox="0 0 20 20"><circle cx="10" cy="10" r="9.500" fill="#4a9fd6"/><path d="M4.500 7h2.500l1-1.500h4L13 7h2.500v7.500h-11z" fill="#fff"/><circle cx="10" cy="10.500" r="2.600" fill="#4a9fd6"/><circle cx="10" cy="10.500" r="1.300" fill="#fff"/></svg><div class="abs" style="left:1307px;top:2px;width:6px;height:2px;background:#e8e8e8"></div><div class="abs" style="left:1368px;top:2px;width:120px;height:28px;border:1px solid #222;background:#2c2c2c"></div><span class="abs" style="left:1372px;top:2px;line-height:25px;font-size:18.500px;letter-spacing:-.8px;color:#f2f2f2;-webkit-text-stroke:.3px #f2f2f2">qb</span><svg style="left:1397px;top:6px" width="20" height="22" viewBox="0 0 20 22"><rect x="0" y="3" width="14" height="12" rx="1.500" fill="#e4e4e4"/><path d="M14 8l5-3.500v9L14 10z" fill="#e4e4e4"/><circle cx="7" cy="9" r="3.800" fill="#14a4c8"/><path d="M3 20.500h15v-3z" fill="#f08a1c"/></svg><svg style="left:1420px;top:4px" width="20" height="22" viewBox="0 0 20 22"><path d="M8.300 1h3.400l4.300 14H4z" fill="#f48b00"/><path d="M7 6h6l1 3.300H6zM5.200 12h9.600l.7 2.400h-11z" fill="#fff"/><path d="M2 15.500h16l2 6H0z" fill="#f48b00"/></svg><svg style="left:1444px;top:5px" width="21" height="21" viewBox="0 0 21 21" fill="none"><circle cx="10.500" cy="10.500" r="8" stroke="#f0a823" stroke-width="3"/><path d="M7.500 6.500h5.500v3.500H8v4.500h6" stroke="#e88a1a" stroke-width="2"/><path d="M16 3l3 1-1 3M5 18l-3-1 1-3" stroke="#f6c945" stroke-width="1.600"/></svg><svg style="left:1471px;top:9px" width="15" height="14" viewBox="0 0 15 14" fill="none" stroke="#ececec" stroke-width="1.600"><rect x=".8" y=".8" width="13.400" height="10"/><path d="M4 13h7" stroke-width="2"/></svg><svg style="left:1496px;top:6px" width="18" height="20" viewBox="0 0 18 20"><path d="M1 7h3.500L9 2.500v15L4.500 13H1z" fill="#f2f2f2"/><path d="M11.500 6.500a5 5 0 0 1 0 7M13.500 3.500a9 9 0 0 1 0 13" fill="none" stroke="#f2f2f2" stroke-width="1.700"/></svg><span class="abs" style="left:1524px;top:1px;line-height:30px;font-size:13.200px;letter-spacing:-.3px;color:#e4e4e4">4:36:51</span><svg style="left:1573px;top:4px" width="24" height="24" viewBox="0 0 26 26"><defs><radialGradient id="gl36" cx=".38" cy=".32" r=".75"><stop offset="0" stop-color="#cfe6fb"/><stop offset=".45" stop-color="#4a95e0"/><stop offset="1" stop-color="#1b4e9e"/></radialGradient></defs><circle cx="13" cy="13" r="12.500" fill="url(#gl36)"/><path d="M5 9c3-2 6-1 8 1s5 1 7-1c1 3-1 6-4 7s-4 4-7 3-5-6-4-10z" fill="#e8f2fc" opacity=".75"/></svg>
</div>


<!-- mouse cursor -->
<svg style="left:1487px;top:95px" width="14" height="21" viewBox="0 0 14 21"><path d="M1.500 1.500 L1.500 17 L5.200 13.600 L7.800 19.600 L10.300 18.500 L7.700 12.700 L12.600 12.700 Z" fill="#111" stroke="#fff" stroke-width="1.200" stroke-linejoin="round"/></svg>

</div>
</body>
</html>
